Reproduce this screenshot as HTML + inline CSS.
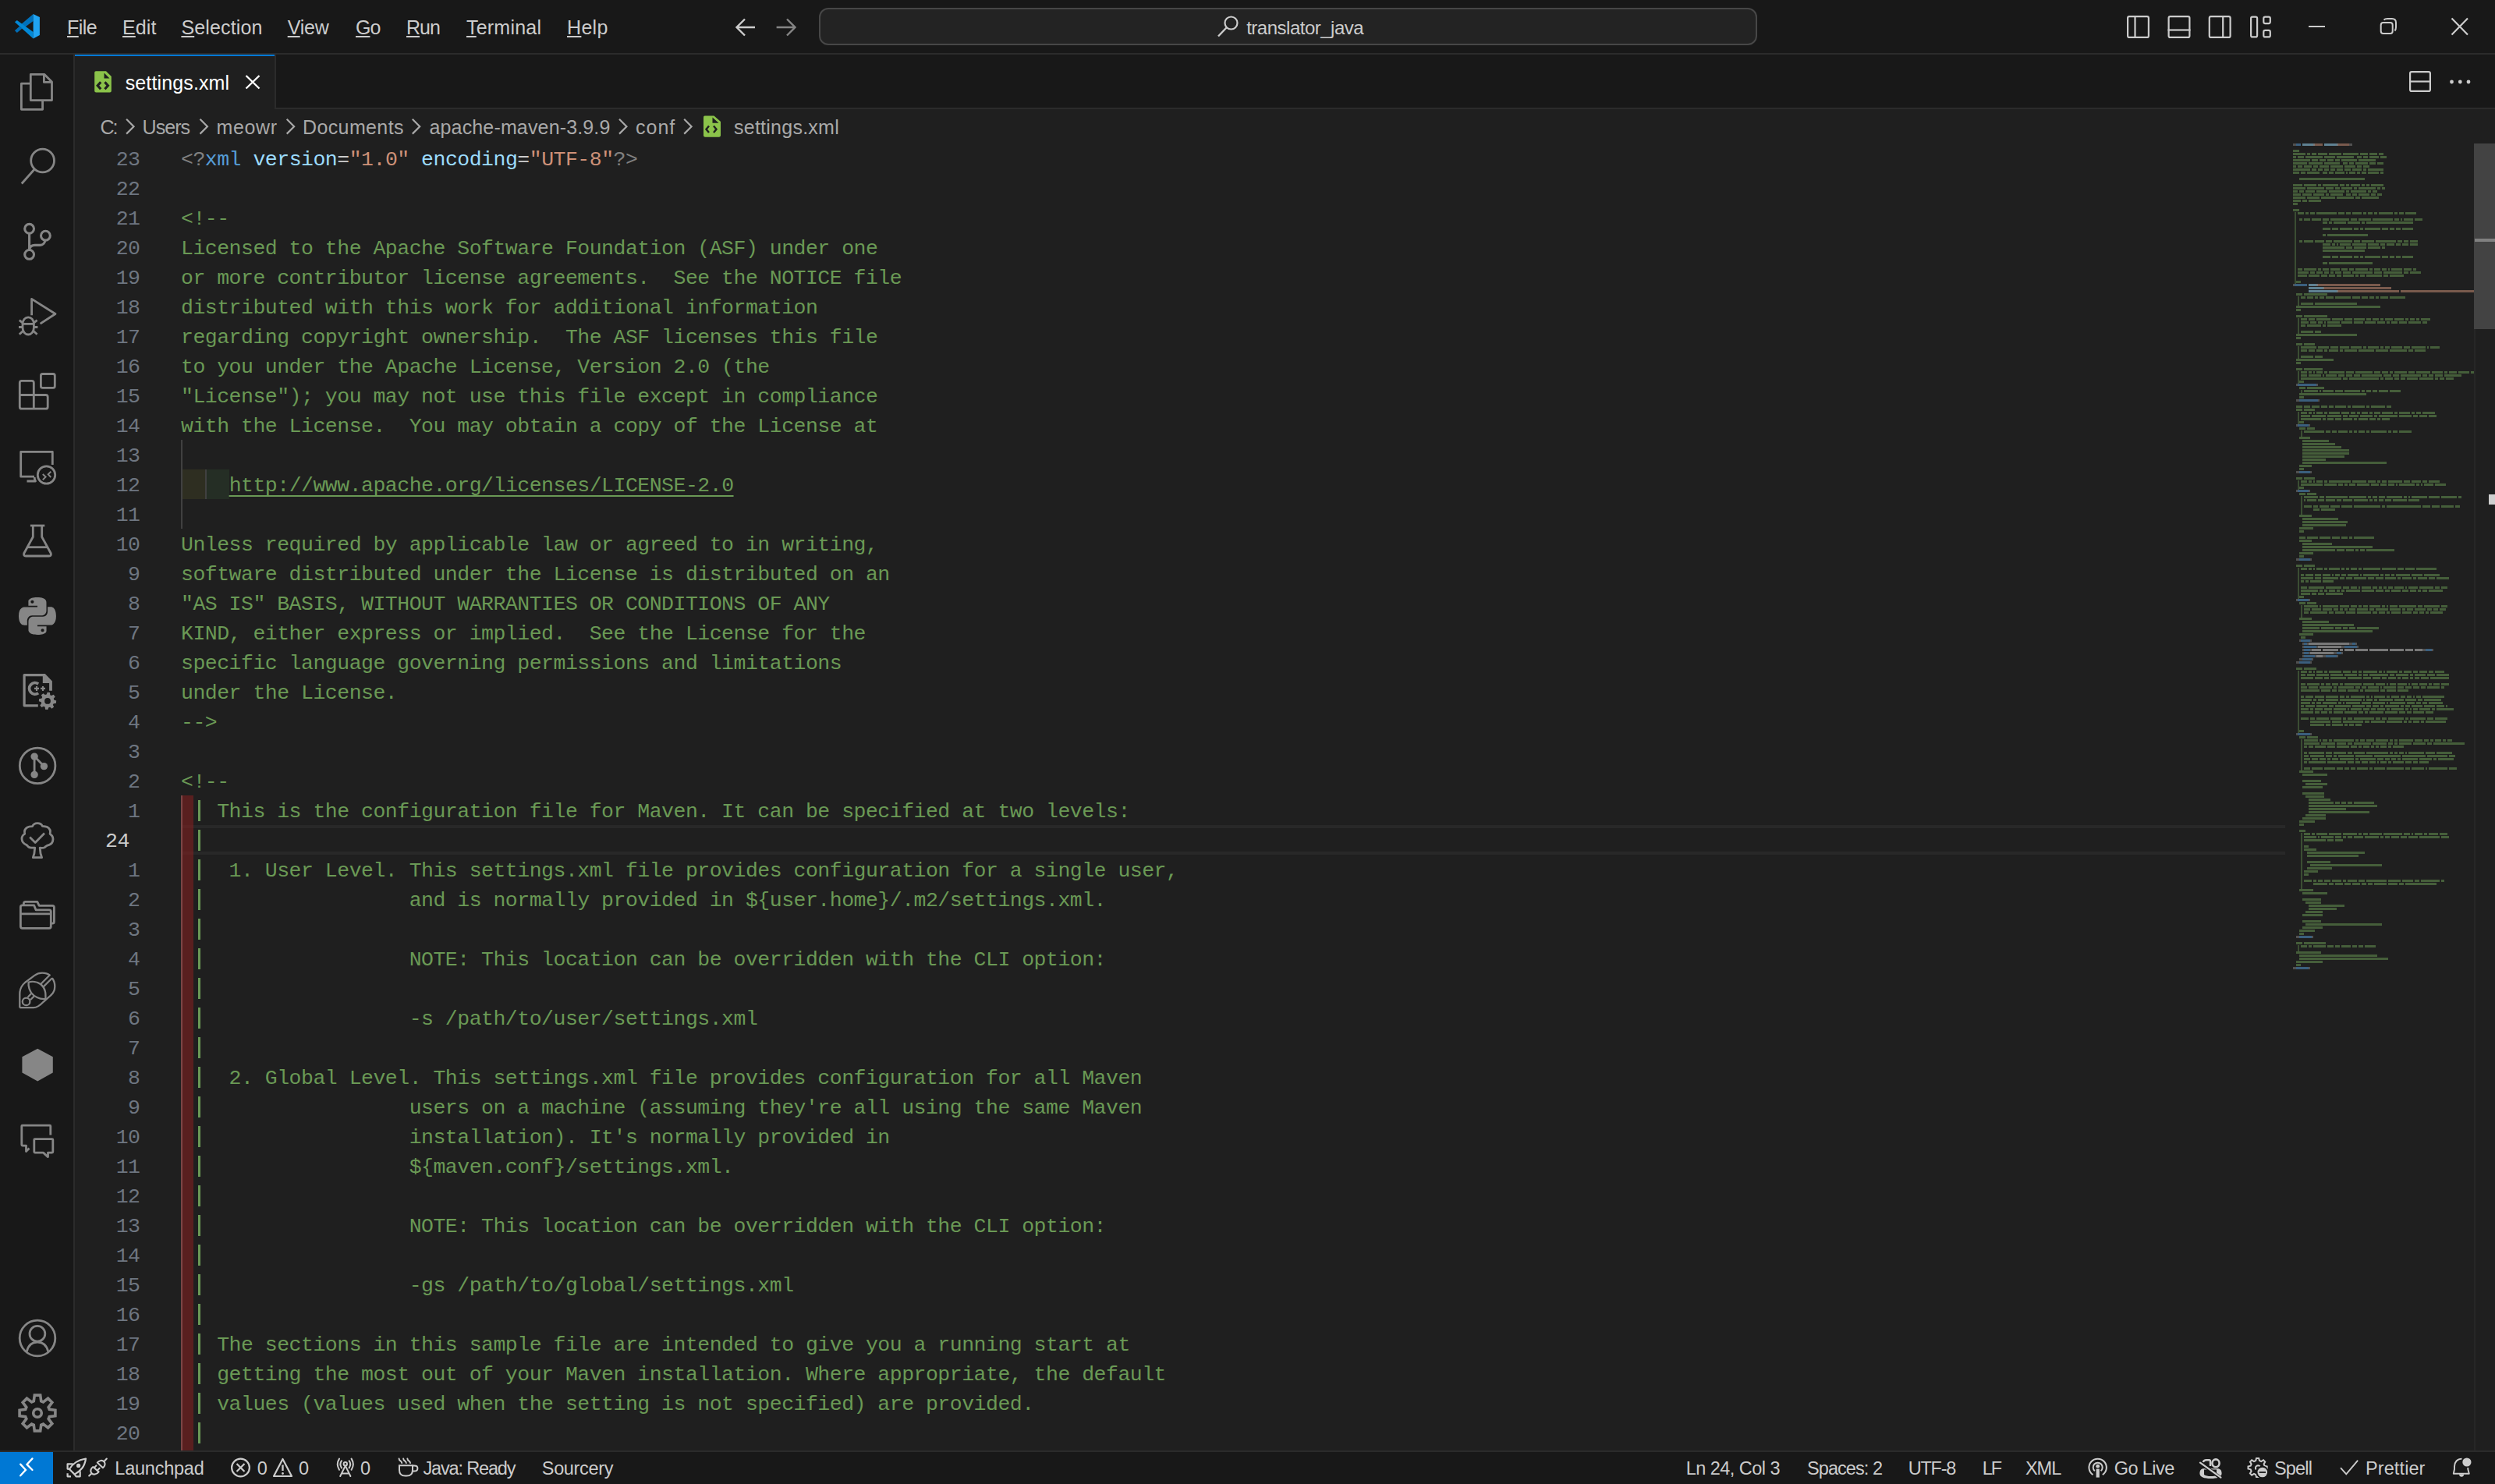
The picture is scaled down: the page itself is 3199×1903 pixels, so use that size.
<!DOCTYPE html>
<html><head><meta charset="utf-8"><style>
html,body{margin:0;padding:0;width:3199px;height:1903px;overflow:hidden;background:#1f1f1f}
</style></head><body>
<div style="position:absolute;left:0;top:0;width:3199px;height:1903px;background:#1f1f1f"></div>
<div style="position:absolute;left:0px;top:0px;width:3199px;height:68px;background:#181818;"></div>
<div style="position:absolute;left:0px;top:68px;width:3199px;height:2px;background:#2b2b2b;"></div>
<div style="position:absolute;left:0px;top:70px;width:94px;height:1790px;background:#181818;"></div>
<div style="position:absolute;left:94px;top:70px;width:2px;height:1790px;background:#2b2b2b;"></div>
<div style="position:absolute;left:96px;top:70px;width:3103px;height:70px;background:#181818;"></div>
<div style="position:absolute;left:96px;top:138px;width:3103px;height:2px;background:#2b2b2b;"></div>
<div style="position:absolute;left:96px;top:70px;width:256px;height:70px;background:#1f1f1f;"></div>
<div style="position:absolute;left:96px;top:70px;width:256px;height:2px;background:#0078d4;"></div>
<div style="position:absolute;left:352px;top:70px;width:2px;height:68px;background:#2b2b2b;"></div>
<div style="position:absolute;left:0px;top:1860px;width:3199px;height:43px;background:#181818;"></div>
<div style="position:absolute;left:0px;top:1860px;width:3199px;height:2px;background:#2b2b2b;"></div>
<div style="position:absolute;left:0px;top:1862px;width:68px;height:41px;background:#0078d4;"></div>
<div style="position:absolute;left:86px;top:19.84px;height:31px;line-height:31px;font-family:'Liberation Sans', sans-serif;font-size:25px;color:#cccccc;white-space:pre;letter-spacing:-0.53px;"><span style="text-decoration:underline;text-underline-offset:2px;text-decoration-thickness:2px">F</span>ile</div>
<div style="position:absolute;left:157px;top:19.84px;height:31px;line-height:31px;font-family:'Liberation Sans', sans-serif;font-size:25px;color:#cccccc;white-space:pre;letter-spacing:0.13px;"><span style="text-decoration:underline;text-underline-offset:2px;text-decoration-thickness:2px">E</span>dit</div>
<div style="position:absolute;left:232.4px;top:19.84px;height:31px;line-height:31px;font-family:'Liberation Sans', sans-serif;font-size:25px;color:#cccccc;white-space:pre;letter-spacing:0.15px;"><span style="text-decoration:underline;text-underline-offset:2px;text-decoration-thickness:2px">S</span>election</div>
<div style="position:absolute;left:368.7px;top:19.84px;height:31px;line-height:31px;font-family:'Liberation Sans', sans-serif;font-size:25px;color:#cccccc;white-space:pre;letter-spacing:-0.23px;"><span style="text-decoration:underline;text-underline-offset:2px;text-decoration-thickness:2px">V</span>iew</div>
<div style="position:absolute;left:456px;top:19.84px;height:31px;line-height:31px;font-family:'Liberation Sans', sans-serif;font-size:25px;color:#cccccc;white-space:pre;letter-spacing:-1.00px;"><span style="text-decoration:underline;text-underline-offset:2px;text-decoration-thickness:2px">G</span>o</div>
<div style="position:absolute;left:521px;top:19.84px;height:31px;line-height:31px;font-family:'Liberation Sans', sans-serif;font-size:25px;color:#cccccc;white-space:pre;letter-spacing:-1.00px;"><span style="text-decoration:underline;text-underline-offset:2px;text-decoration-thickness:2px">R</span>un</div>
<div style="position:absolute;left:598px;top:19.84px;height:31px;line-height:31px;font-family:'Liberation Sans', sans-serif;font-size:25px;color:#cccccc;white-space:pre;letter-spacing:0.21px;"><span style="text-decoration:underline;text-underline-offset:2px;text-decoration-thickness:2px">T</span>erminal</div>
<div style="position:absolute;left:727px;top:19.84px;height:31px;line-height:31px;font-family:'Liberation Sans', sans-serif;font-size:25px;color:#cccccc;white-space:pre;letter-spacing:0.33px;"><span style="text-decoration:underline;text-underline-offset:2px;text-decoration-thickness:2px">H</span>elp</div>
<div style="position:absolute;left:1050px;top:10px;width:1199px;height:44px;border:2px solid #474747;border-radius:12px;background:#232323"></div>
<div style="position:absolute;left:1598.2px;top:20.68px;height:30px;line-height:30px;font-family:'Liberation Sans', sans-serif;font-size:24px;color:#cccccc;white-space:pre;letter-spacing:-0.50px;">translator_java</div>
<div style="position:absolute;left:160.7px;top:91.34px;height:31px;line-height:31px;font-family:'Liberation Sans', sans-serif;font-size:25px;color:#ffffff;white-space:pre;letter-spacing:0.13px;">settings.xml</div>
<div style="position:absolute;left:128.4px;top:148.34px;height:31px;line-height:31px;font-family:'Liberation Sans', sans-serif;font-size:25px;color:#a9a9a9;white-space:pre;letter-spacing:-2.00px;">C:</div>
<div style="position:absolute;left:182.5px;top:148.34px;height:31px;line-height:31px;font-family:'Liberation Sans', sans-serif;font-size:25px;color:#a9a9a9;white-space:pre;letter-spacing:-0.92px;">Users</div>
<div style="position:absolute;left:277.5px;top:148.34px;height:31px;line-height:31px;font-family:'Liberation Sans', sans-serif;font-size:25px;color:#a9a9a9;white-space:pre;letter-spacing:0.62px;">meowr</div>
<div style="position:absolute;left:388px;top:148.34px;height:31px;line-height:31px;font-family:'Liberation Sans', sans-serif;font-size:25px;color:#a9a9a9;white-space:pre;letter-spacing:0.38px;">Documents</div>
<div style="position:absolute;left:550.5px;top:148.34px;height:31px;line-height:31px;font-family:'Liberation Sans', sans-serif;font-size:25px;color:#a9a9a9;white-space:pre;letter-spacing:0.15px;">apache-maven-3.9.9</div>
<div style="position:absolute;left:815px;top:148.34px;height:31px;line-height:31px;font-family:'Liberation Sans', sans-serif;font-size:25px;color:#a9a9a9;white-space:pre;letter-spacing:1.00px;">conf</div>
<div style="position:absolute;left:941px;top:148.34px;height:31px;line-height:31px;font-family:'Liberation Sans', sans-serif;font-size:25px;color:#a9a9a9;white-space:pre;letter-spacing:0.25px;">settings.xml</div>
<div style="position:absolute;left:147.3px;top:1869.36px;height:29px;line-height:29px;font-family:'Liberation Sans', sans-serif;font-size:23.5px;color:#cccccc;white-space:pre;letter-spacing:-0.23px;">Launchpad</div>
<div style="position:absolute;left:329.7px;top:1869.36px;height:29px;line-height:29px;font-family:'Liberation Sans', sans-serif;font-size:23.5px;color:#cccccc;white-space:pre;letter-spacing:0.00px;">0</div>
<div style="position:absolute;left:383px;top:1869.36px;height:29px;line-height:29px;font-family:'Liberation Sans', sans-serif;font-size:23.5px;color:#cccccc;white-space:pre;letter-spacing:0.00px;">0</div>
<div style="position:absolute;left:462px;top:1869.36px;height:29px;line-height:29px;font-family:'Liberation Sans', sans-serif;font-size:23.5px;color:#cccccc;white-space:pre;letter-spacing:0.00px;">0</div>
<div style="position:absolute;left:542.5px;top:1869.36px;height:29px;line-height:29px;font-family:'Liberation Sans', sans-serif;font-size:23.5px;color:#cccccc;white-space:pre;letter-spacing:-1.17px;">Java: Ready</div>
<div style="position:absolute;left:694.8px;top:1869.36px;height:29px;line-height:29px;font-family:'Liberation Sans', sans-serif;font-size:23.5px;color:#cccccc;white-space:pre;letter-spacing:-0.34px;">Sourcery</div>
<div style="position:absolute;left:2161.7px;top:1869.36px;height:29px;line-height:29px;font-family:'Liberation Sans', sans-serif;font-size:23.5px;color:#cccccc;white-space:pre;letter-spacing:-0.54px;">Ln 24, Col 3</div>
<div style="position:absolute;left:2317px;top:1869.36px;height:29px;line-height:29px;font-family:'Liberation Sans', sans-serif;font-size:23.5px;color:#cccccc;white-space:pre;letter-spacing:-0.93px;">Spaces: 2</div>
<div style="position:absolute;left:2446.7px;top:1869.36px;height:29px;line-height:29px;font-family:'Liberation Sans', sans-serif;font-size:23.5px;color:#cccccc;white-space:pre;letter-spacing:-1.22px;">UTF-8</div>
<div style="position:absolute;left:2541.8px;top:1869.36px;height:29px;line-height:29px;font-family:'Liberation Sans', sans-serif;font-size:23.5px;color:#cccccc;white-space:pre;letter-spacing:-2.00px;">LF</div>
<div style="position:absolute;left:2596.9px;top:1869.36px;height:29px;line-height:29px;font-family:'Liberation Sans', sans-serif;font-size:23.5px;color:#cccccc;white-space:pre;letter-spacing:-0.95px;">XML</div>
<div style="position:absolute;left:2710.7px;top:1869.36px;height:29px;line-height:29px;font-family:'Liberation Sans', sans-serif;font-size:23.5px;color:#cccccc;white-space:pre;letter-spacing:-0.57px;">Go Live</div>
<div style="position:absolute;left:2916px;top:1869.36px;height:29px;line-height:29px;font-family:'Liberation Sans', sans-serif;font-size:23.5px;color:#cccccc;white-space:pre;letter-spacing:-0.85px;">Spell</div>
<div style="position:absolute;left:3033px;top:1869.36px;height:29px;line-height:29px;font-family:'Liberation Sans', sans-serif;font-size:23.5px;color:#cccccc;white-space:pre;letter-spacing:0.10px;">Prettier</div>
<div style="position:absolute;left:96px;top:184px;width:3103px;height:1676px;overflow:hidden">
<div style="position:absolute;left:136px;top:874px;width:2698px;height:38px;box-sizing:border-box;border-top:4px solid #282828;border-bottom:4px solid #282828"></div>
<div style="position:absolute;left:136px;top:418px;width:30.8px;height:38px;background:rgba(255,255,64,0.07)"></div>
<div style="position:absolute;left:166.8px;top:418px;width:30.8px;height:38px;background:rgba(127,255,127,0.07)"></div>
<div style="position:absolute;left:136px;top:380px;width:2px;height:114px;background:#404040"></div>
<div style="position:absolute;left:166.8px;top:418px;width:2px;height:38px;background:#404040"></div>
<div style="position:absolute;left:136px;top:836px;width:16.4px;height:874px;background:rgba(128,32,32,0.6)"></div>
<div style="position:absolute;left:136px;top:836px;width:2px;height:874px;background:#7b4545"></div>
<div style="position:absolute;left:52.7px;top:2.1px;height:38px;line-height:38px;font-family:'Liberation Mono', monospace;font-size:26.5px;letter-spacing:-0.50px;color:#6e7681;white-space:pre">23</div>
<div style="position:absolute;left:136px;top:2.1px;height:38px;line-height:38px;font-family:'Liberation Mono', monospace;font-size:26.5px;letter-spacing:-0.50px;white-space:pre"><span style="color:#808080">&lt;?</span><span style="color:#569cd6">xml</span><span style="color:#cccccc"> </span><span style="color:#9cdcfe">version</span><span style="color:#cccccc">=</span><span style="color:#ce9178">&quot;1.0&quot;</span><span style="color:#cccccc"> </span><span style="color:#9cdcfe">encoding</span><span style="color:#cccccc">=</span><span style="color:#ce9178">&quot;UTF-8&quot;</span><span style="color:#808080">?&gt;</span></div>
<div style="position:absolute;left:52.7px;top:40.1px;height:38px;line-height:38px;font-family:'Liberation Mono', monospace;font-size:26.5px;letter-spacing:-0.50px;color:#6e7681;white-space:pre">22</div>
<div style="position:absolute;left:52.7px;top:78.1px;height:38px;line-height:38px;font-family:'Liberation Mono', monospace;font-size:26.5px;letter-spacing:-0.50px;color:#6e7681;white-space:pre">21</div>
<div style="position:absolute;left:136px;top:78.1px;height:38px;line-height:38px;font-family:'Liberation Mono', monospace;font-size:26.5px;letter-spacing:-0.50px;white-space:pre"><span style="color:#6a9955">&lt;!--</span></div>
<div style="position:absolute;left:52.7px;top:116.1px;height:38px;line-height:38px;font-family:'Liberation Mono', monospace;font-size:26.5px;letter-spacing:-0.50px;color:#6e7681;white-space:pre">20</div>
<div style="position:absolute;left:136px;top:116.1px;height:38px;line-height:38px;font-family:'Liberation Mono', monospace;font-size:26.5px;letter-spacing:-0.50px;white-space:pre"><span style="color:#6a9955">Licensed to the Apache Software Foundation (ASF) under one</span></div>
<div style="position:absolute;left:52.7px;top:154.1px;height:38px;line-height:38px;font-family:'Liberation Mono', monospace;font-size:26.5px;letter-spacing:-0.50px;color:#6e7681;white-space:pre">19</div>
<div style="position:absolute;left:136px;top:154.1px;height:38px;line-height:38px;font-family:'Liberation Mono', monospace;font-size:26.5px;letter-spacing:-0.50px;white-space:pre"><span style="color:#6a9955">or more contributor license agreements.  See the NOTICE file</span></div>
<div style="position:absolute;left:52.7px;top:192.1px;height:38px;line-height:38px;font-family:'Liberation Mono', monospace;font-size:26.5px;letter-spacing:-0.50px;color:#6e7681;white-space:pre">18</div>
<div style="position:absolute;left:136px;top:192.1px;height:38px;line-height:38px;font-family:'Liberation Mono', monospace;font-size:26.5px;letter-spacing:-0.50px;white-space:pre"><span style="color:#6a9955">distributed with this work for additional information</span></div>
<div style="position:absolute;left:52.7px;top:230.1px;height:38px;line-height:38px;font-family:'Liberation Mono', monospace;font-size:26.5px;letter-spacing:-0.50px;color:#6e7681;white-space:pre">17</div>
<div style="position:absolute;left:136px;top:230.1px;height:38px;line-height:38px;font-family:'Liberation Mono', monospace;font-size:26.5px;letter-spacing:-0.50px;white-space:pre"><span style="color:#6a9955">regarding copyright ownership.  The ASF licenses this file</span></div>
<div style="position:absolute;left:52.7px;top:268.1px;height:38px;line-height:38px;font-family:'Liberation Mono', monospace;font-size:26.5px;letter-spacing:-0.50px;color:#6e7681;white-space:pre">16</div>
<div style="position:absolute;left:136px;top:268.1px;height:38px;line-height:38px;font-family:'Liberation Mono', monospace;font-size:26.5px;letter-spacing:-0.50px;white-space:pre"><span style="color:#6a9955">to you under the Apache License, Version 2.0 (the</span></div>
<div style="position:absolute;left:52.7px;top:306.1px;height:38px;line-height:38px;font-family:'Liberation Mono', monospace;font-size:26.5px;letter-spacing:-0.50px;color:#6e7681;white-space:pre">15</div>
<div style="position:absolute;left:136px;top:306.1px;height:38px;line-height:38px;font-family:'Liberation Mono', monospace;font-size:26.5px;letter-spacing:-0.50px;white-space:pre"><span style="color:#6a9955">&quot;License&quot;); you may not use this file except in compliance</span></div>
<div style="position:absolute;left:52.7px;top:344.1px;height:38px;line-height:38px;font-family:'Liberation Mono', monospace;font-size:26.5px;letter-spacing:-0.50px;color:#6e7681;white-space:pre">14</div>
<div style="position:absolute;left:136px;top:344.1px;height:38px;line-height:38px;font-family:'Liberation Mono', monospace;font-size:26.5px;letter-spacing:-0.50px;white-space:pre"><span style="color:#6a9955">with the License.  You may obtain a copy of the License at</span></div>
<div style="position:absolute;left:52.7px;top:382.1px;height:38px;line-height:38px;font-family:'Liberation Mono', monospace;font-size:26.5px;letter-spacing:-0.50px;color:#6e7681;white-space:pre">13</div>
<div style="position:absolute;left:52.7px;top:420.1px;height:38px;line-height:38px;font-family:'Liberation Mono', monospace;font-size:26.5px;letter-spacing:-0.50px;color:#6e7681;white-space:pre">12</div>
<div style="position:absolute;left:136px;top:420.1px;height:38px;line-height:38px;font-family:'Liberation Mono', monospace;font-size:26.5px;letter-spacing:-0.50px;white-space:pre"><span style="color:#6a9955">    </span><span style="color:#6a9955;text-decoration:underline;text-decoration-thickness:2px;text-underline-offset:5px">http://www.apache.org/licenses/LICENSE-2.0</span></div>
<div style="position:absolute;left:52.7px;top:458.1px;height:38px;line-height:38px;font-family:'Liberation Mono', monospace;font-size:26.5px;letter-spacing:-0.50px;color:#6e7681;white-space:pre">11</div>
<div style="position:absolute;left:52.7px;top:496.1px;height:38px;line-height:38px;font-family:'Liberation Mono', monospace;font-size:26.5px;letter-spacing:-0.50px;color:#6e7681;white-space:pre">10</div>
<div style="position:absolute;left:136px;top:496.1px;height:38px;line-height:38px;font-family:'Liberation Mono', monospace;font-size:26.5px;letter-spacing:-0.50px;white-space:pre"><span style="color:#6a9955">Unless required by applicable law or agreed to in writing,</span></div>
<div style="position:absolute;left:68.1px;top:534.1px;height:38px;line-height:38px;font-family:'Liberation Mono', monospace;font-size:26.5px;letter-spacing:-0.50px;color:#6e7681;white-space:pre">9</div>
<div style="position:absolute;left:136px;top:534.1px;height:38px;line-height:38px;font-family:'Liberation Mono', monospace;font-size:26.5px;letter-spacing:-0.50px;white-space:pre"><span style="color:#6a9955">software distributed under the License is distributed on an</span></div>
<div style="position:absolute;left:68.1px;top:572.1px;height:38px;line-height:38px;font-family:'Liberation Mono', monospace;font-size:26.5px;letter-spacing:-0.50px;color:#6e7681;white-space:pre">8</div>
<div style="position:absolute;left:136px;top:572.1px;height:38px;line-height:38px;font-family:'Liberation Mono', monospace;font-size:26.5px;letter-spacing:-0.50px;white-space:pre"><span style="color:#6a9955">&quot;AS IS&quot; BASIS, WITHOUT WARRANTIES OR CONDITIONS OF ANY</span></div>
<div style="position:absolute;left:68.1px;top:610.1px;height:38px;line-height:38px;font-family:'Liberation Mono', monospace;font-size:26.5px;letter-spacing:-0.50px;color:#6e7681;white-space:pre">7</div>
<div style="position:absolute;left:136px;top:610.1px;height:38px;line-height:38px;font-family:'Liberation Mono', monospace;font-size:26.5px;letter-spacing:-0.50px;white-space:pre"><span style="color:#6a9955">KIND, either express or implied.  See the License for the</span></div>
<div style="position:absolute;left:68.1px;top:648.1px;height:38px;line-height:38px;font-family:'Liberation Mono', monospace;font-size:26.5px;letter-spacing:-0.50px;color:#6e7681;white-space:pre">6</div>
<div style="position:absolute;left:136px;top:648.1px;height:38px;line-height:38px;font-family:'Liberation Mono', monospace;font-size:26.5px;letter-spacing:-0.50px;white-space:pre"><span style="color:#6a9955">specific language governing permissions and limitations</span></div>
<div style="position:absolute;left:68.1px;top:686.1px;height:38px;line-height:38px;font-family:'Liberation Mono', monospace;font-size:26.5px;letter-spacing:-0.50px;color:#6e7681;white-space:pre">5</div>
<div style="position:absolute;left:136px;top:686.1px;height:38px;line-height:38px;font-family:'Liberation Mono', monospace;font-size:26.5px;letter-spacing:-0.50px;white-space:pre"><span style="color:#6a9955">under the License.</span></div>
<div style="position:absolute;left:68.1px;top:724.1px;height:38px;line-height:38px;font-family:'Liberation Mono', monospace;font-size:26.5px;letter-spacing:-0.50px;color:#6e7681;white-space:pre">4</div>
<div style="position:absolute;left:136px;top:724.1px;height:38px;line-height:38px;font-family:'Liberation Mono', monospace;font-size:26.5px;letter-spacing:-0.50px;white-space:pre"><span style="color:#6a9955">--&gt;</span></div>
<div style="position:absolute;left:68.1px;top:762.1px;height:38px;line-height:38px;font-family:'Liberation Mono', monospace;font-size:26.5px;letter-spacing:-0.50px;color:#6e7681;white-space:pre">3</div>
<div style="position:absolute;left:68.1px;top:800.1px;height:38px;line-height:38px;font-family:'Liberation Mono', monospace;font-size:26.5px;letter-spacing:-0.50px;color:#6e7681;white-space:pre">2</div>
<div style="position:absolute;left:136px;top:800.1px;height:38px;line-height:38px;font-family:'Liberation Mono', monospace;font-size:26.5px;letter-spacing:-0.50px;white-space:pre"><span style="color:#6a9955">&lt;!--</span></div>
<div style="position:absolute;left:68.1px;top:838.1px;height:38px;line-height:38px;font-family:'Liberation Mono', monospace;font-size:26.5px;letter-spacing:-0.50px;color:#6e7681;white-space:pre">1</div>
<div style="position:absolute;left:158.0px;top:842px;width:2.6px;height:27px;background:#6a9955"></div>
<div style="position:absolute;left:136px;top:838.1px;height:38px;line-height:38px;font-family:'Liberation Mono', monospace;font-size:26.5px;letter-spacing:-0.50px;white-space:pre"><span style="color:#6a9955">   This is the configuration file for Maven. It can be specified at two levels:</span></div>
<div style="position:absolute;left:39px;top:876.1px;height:38px;line-height:38px;font-family:'Liberation Mono', monospace;font-size:26.5px;letter-spacing:-0.50px;color:#cccccc;white-space:pre">24</div>
<div style="position:absolute;left:158.0px;top:880px;width:2.6px;height:27px;background:#6a9955"></div>
<div style="position:absolute;left:136px;top:876.1px;height:38px;line-height:38px;font-family:'Liberation Mono', monospace;font-size:26.5px;letter-spacing:-0.50px;white-space:pre"><span style="color:#6a9955">  </span></div>
<div style="position:absolute;left:68.1px;top:914.1px;height:38px;line-height:38px;font-family:'Liberation Mono', monospace;font-size:26.5px;letter-spacing:-0.50px;color:#6e7681;white-space:pre">1</div>
<div style="position:absolute;left:158.0px;top:918px;width:2.6px;height:27px;background:#6a9955"></div>
<div style="position:absolute;left:136px;top:914.1px;height:38px;line-height:38px;font-family:'Liberation Mono', monospace;font-size:26.5px;letter-spacing:-0.50px;white-space:pre"><span style="color:#6a9955">    1. User Level. This settings.xml file provides configuration for a single user,</span></div>
<div style="position:absolute;left:68.1px;top:952.1px;height:38px;line-height:38px;font-family:'Liberation Mono', monospace;font-size:26.5px;letter-spacing:-0.50px;color:#6e7681;white-space:pre">2</div>
<div style="position:absolute;left:158.0px;top:956px;width:2.6px;height:27px;background:#6a9955"></div>
<div style="position:absolute;left:136px;top:952.1px;height:38px;line-height:38px;font-family:'Liberation Mono', monospace;font-size:26.5px;letter-spacing:-0.50px;white-space:pre"><span style="color:#6a9955">                   and is normally provided in ${user.home}/.m2/settings.xml.</span></div>
<div style="position:absolute;left:68.1px;top:990.1px;height:38px;line-height:38px;font-family:'Liberation Mono', monospace;font-size:26.5px;letter-spacing:-0.50px;color:#6e7681;white-space:pre">3</div>
<div style="position:absolute;left:158.0px;top:994px;width:2.6px;height:27px;background:#6a9955"></div>
<div style="position:absolute;left:136px;top:990.1px;height:38px;line-height:38px;font-family:'Liberation Mono', monospace;font-size:26.5px;letter-spacing:-0.50px;white-space:pre"><span style="color:#6a9955">  </span></div>
<div style="position:absolute;left:68.1px;top:1028.1px;height:38px;line-height:38px;font-family:'Liberation Mono', monospace;font-size:26.5px;letter-spacing:-0.50px;color:#6e7681;white-space:pre">4</div>
<div style="position:absolute;left:158.0px;top:1032px;width:2.6px;height:27px;background:#6a9955"></div>
<div style="position:absolute;left:136px;top:1028.1px;height:38px;line-height:38px;font-family:'Liberation Mono', monospace;font-size:26.5px;letter-spacing:-0.50px;white-space:pre"><span style="color:#6a9955">                   NOTE: This location can be overridden with the CLI option:</span></div>
<div style="position:absolute;left:68.1px;top:1066.1px;height:38px;line-height:38px;font-family:'Liberation Mono', monospace;font-size:26.5px;letter-spacing:-0.50px;color:#6e7681;white-space:pre">5</div>
<div style="position:absolute;left:158.0px;top:1070px;width:2.6px;height:27px;background:#6a9955"></div>
<div style="position:absolute;left:136px;top:1066.1px;height:38px;line-height:38px;font-family:'Liberation Mono', monospace;font-size:26.5px;letter-spacing:-0.50px;white-space:pre"><span style="color:#6a9955">  </span></div>
<div style="position:absolute;left:68.1px;top:1104.1px;height:38px;line-height:38px;font-family:'Liberation Mono', monospace;font-size:26.5px;letter-spacing:-0.50px;color:#6e7681;white-space:pre">6</div>
<div style="position:absolute;left:158.0px;top:1108px;width:2.6px;height:27px;background:#6a9955"></div>
<div style="position:absolute;left:136px;top:1104.1px;height:38px;line-height:38px;font-family:'Liberation Mono', monospace;font-size:26.5px;letter-spacing:-0.50px;white-space:pre"><span style="color:#6a9955">                   -s /path/to/user/settings.xml</span></div>
<div style="position:absolute;left:68.1px;top:1142.1px;height:38px;line-height:38px;font-family:'Liberation Mono', monospace;font-size:26.5px;letter-spacing:-0.50px;color:#6e7681;white-space:pre">7</div>
<div style="position:absolute;left:158.0px;top:1146px;width:2.6px;height:27px;background:#6a9955"></div>
<div style="position:absolute;left:136px;top:1142.1px;height:38px;line-height:38px;font-family:'Liberation Mono', monospace;font-size:26.5px;letter-spacing:-0.50px;white-space:pre"><span style="color:#6a9955">  </span></div>
<div style="position:absolute;left:68.1px;top:1180.1px;height:38px;line-height:38px;font-family:'Liberation Mono', monospace;font-size:26.5px;letter-spacing:-0.50px;color:#6e7681;white-space:pre">8</div>
<div style="position:absolute;left:158.0px;top:1184px;width:2.6px;height:27px;background:#6a9955"></div>
<div style="position:absolute;left:136px;top:1180.1px;height:38px;line-height:38px;font-family:'Liberation Mono', monospace;font-size:26.5px;letter-spacing:-0.50px;white-space:pre"><span style="color:#6a9955">    2. Global Level. This settings.xml file provides configuration for all Maven</span></div>
<div style="position:absolute;left:68.1px;top:1218.1px;height:38px;line-height:38px;font-family:'Liberation Mono', monospace;font-size:26.5px;letter-spacing:-0.50px;color:#6e7681;white-space:pre">9</div>
<div style="position:absolute;left:158.0px;top:1222px;width:2.6px;height:27px;background:#6a9955"></div>
<div style="position:absolute;left:136px;top:1218.1px;height:38px;line-height:38px;font-family:'Liberation Mono', monospace;font-size:26.5px;letter-spacing:-0.50px;white-space:pre"><span style="color:#6a9955">                   users on a machine (assuming they&#x27;re all using the same Maven</span></div>
<div style="position:absolute;left:52.7px;top:1256.1px;height:38px;line-height:38px;font-family:'Liberation Mono', monospace;font-size:26.5px;letter-spacing:-0.50px;color:#6e7681;white-space:pre">10</div>
<div style="position:absolute;left:158.0px;top:1260px;width:2.6px;height:27px;background:#6a9955"></div>
<div style="position:absolute;left:136px;top:1256.1px;height:38px;line-height:38px;font-family:'Liberation Mono', monospace;font-size:26.5px;letter-spacing:-0.50px;white-space:pre"><span style="color:#6a9955">                   installation). It&#x27;s normally provided in</span></div>
<div style="position:absolute;left:52.7px;top:1294.1px;height:38px;line-height:38px;font-family:'Liberation Mono', monospace;font-size:26.5px;letter-spacing:-0.50px;color:#6e7681;white-space:pre">11</div>
<div style="position:absolute;left:158.0px;top:1298px;width:2.6px;height:27px;background:#6a9955"></div>
<div style="position:absolute;left:136px;top:1294.1px;height:38px;line-height:38px;font-family:'Liberation Mono', monospace;font-size:26.5px;letter-spacing:-0.50px;white-space:pre"><span style="color:#6a9955">                   ${maven.conf}/settings.xml.</span></div>
<div style="position:absolute;left:52.7px;top:1332.1px;height:38px;line-height:38px;font-family:'Liberation Mono', monospace;font-size:26.5px;letter-spacing:-0.50px;color:#6e7681;white-space:pre">12</div>
<div style="position:absolute;left:158.0px;top:1336px;width:2.6px;height:27px;background:#6a9955"></div>
<div style="position:absolute;left:136px;top:1332.1px;height:38px;line-height:38px;font-family:'Liberation Mono', monospace;font-size:26.5px;letter-spacing:-0.50px;white-space:pre"><span style="color:#6a9955">  </span></div>
<div style="position:absolute;left:52.7px;top:1370.1px;height:38px;line-height:38px;font-family:'Liberation Mono', monospace;font-size:26.5px;letter-spacing:-0.50px;color:#6e7681;white-space:pre">13</div>
<div style="position:absolute;left:158.0px;top:1374px;width:2.6px;height:27px;background:#6a9955"></div>
<div style="position:absolute;left:136px;top:1370.1px;height:38px;line-height:38px;font-family:'Liberation Mono', monospace;font-size:26.5px;letter-spacing:-0.50px;white-space:pre"><span style="color:#6a9955">                   NOTE: This location can be overridden with the CLI option:</span></div>
<div style="position:absolute;left:52.7px;top:1408.1px;height:38px;line-height:38px;font-family:'Liberation Mono', monospace;font-size:26.5px;letter-spacing:-0.50px;color:#6e7681;white-space:pre">14</div>
<div style="position:absolute;left:158.0px;top:1412px;width:2.6px;height:27px;background:#6a9955"></div>
<div style="position:absolute;left:136px;top:1408.1px;height:38px;line-height:38px;font-family:'Liberation Mono', monospace;font-size:26.5px;letter-spacing:-0.50px;white-space:pre"><span style="color:#6a9955">  </span></div>
<div style="position:absolute;left:52.7px;top:1446.1px;height:38px;line-height:38px;font-family:'Liberation Mono', monospace;font-size:26.5px;letter-spacing:-0.50px;color:#6e7681;white-space:pre">15</div>
<div style="position:absolute;left:158.0px;top:1450px;width:2.6px;height:27px;background:#6a9955"></div>
<div style="position:absolute;left:136px;top:1446.1px;height:38px;line-height:38px;font-family:'Liberation Mono', monospace;font-size:26.5px;letter-spacing:-0.50px;white-space:pre"><span style="color:#6a9955">                   -gs /path/to/global/settings.xml</span></div>
<div style="position:absolute;left:52.7px;top:1484.1px;height:38px;line-height:38px;font-family:'Liberation Mono', monospace;font-size:26.5px;letter-spacing:-0.50px;color:#6e7681;white-space:pre">16</div>
<div style="position:absolute;left:158.0px;top:1488px;width:2.6px;height:27px;background:#6a9955"></div>
<div style="position:absolute;left:136px;top:1484.1px;height:38px;line-height:38px;font-family:'Liberation Mono', monospace;font-size:26.5px;letter-spacing:-0.50px;white-space:pre"><span style="color:#6a9955">  </span></div>
<div style="position:absolute;left:52.7px;top:1522.1px;height:38px;line-height:38px;font-family:'Liberation Mono', monospace;font-size:26.5px;letter-spacing:-0.50px;color:#6e7681;white-space:pre">17</div>
<div style="position:absolute;left:158.0px;top:1526px;width:2.6px;height:27px;background:#6a9955"></div>
<div style="position:absolute;left:136px;top:1522.1px;height:38px;line-height:38px;font-family:'Liberation Mono', monospace;font-size:26.5px;letter-spacing:-0.50px;white-space:pre"><span style="color:#6a9955">   The sections in this sample file are intended to give you a running start at</span></div>
<div style="position:absolute;left:52.7px;top:1560.1px;height:38px;line-height:38px;font-family:'Liberation Mono', monospace;font-size:26.5px;letter-spacing:-0.50px;color:#6e7681;white-space:pre">18</div>
<div style="position:absolute;left:158.0px;top:1564px;width:2.6px;height:27px;background:#6a9955"></div>
<div style="position:absolute;left:136px;top:1560.1px;height:38px;line-height:38px;font-family:'Liberation Mono', monospace;font-size:26.5px;letter-spacing:-0.50px;white-space:pre"><span style="color:#6a9955">   getting the most out of your Maven installation. Where appropriate, the default</span></div>
<div style="position:absolute;left:52.7px;top:1598.1px;height:38px;line-height:38px;font-family:'Liberation Mono', monospace;font-size:26.5px;letter-spacing:-0.50px;color:#6e7681;white-space:pre">19</div>
<div style="position:absolute;left:158.0px;top:1602px;width:2.6px;height:27px;background:#6a9955"></div>
<div style="position:absolute;left:136px;top:1598.1px;height:38px;line-height:38px;font-family:'Liberation Mono', monospace;font-size:26.5px;letter-spacing:-0.50px;white-space:pre"><span style="color:#6a9955">   values (values used when the setting is not specified) are provided.</span></div>
<div style="position:absolute;left:52.7px;top:1636.1px;height:38px;line-height:38px;font-family:'Liberation Mono', monospace;font-size:26.5px;letter-spacing:-0.50px;color:#6e7681;white-space:pre">20</div>
<div style="position:absolute;left:158.0px;top:1640px;width:2.6px;height:27px;background:#6a9955"></div>
<div style="position:absolute;left:136px;top:1636.1px;height:38px;line-height:38px;font-family:'Liberation Mono', monospace;font-size:26.5px;letter-spacing:-0.50px;white-space:pre"><span style="color:#6a9955">  </span></div>
<div style="position:absolute;left:52.7px;top:1674.1px;height:38px;line-height:38px;font-family:'Liberation Mono', monospace;font-size:26.5px;letter-spacing:-0.50px;color:#6e7681;white-space:pre">21</div>
<div style="position:absolute;left:158.0px;top:1678px;width:2.6px;height:27px;background:#6a9955"></div>
<div style="position:absolute;left:136px;top:1674.1px;height:38px;line-height:38px;font-family:'Liberation Mono', monospace;font-size:26.5px;letter-spacing:-0.50px;white-space:pre"><span style="color:#6a9955">  --&gt;</span></div>
</div>
<div style="position:absolute;left:3172px;top:184px;width:27px;height:238px;background:#434343;"></div>
<div style="position:absolute;left:3173px;top:306px;width:26px;height:4px;background:#808080;"></div>
<div style="position:absolute;left:3191px;top:634px;width:8px;height:13px;background:#d0d0d0;"></div>
<div style="position:absolute;left:3172px;top:422px;width:2px;height:1438px;background:#262626;"></div>
<svg style="position:absolute;left:0;top:0" width="3199" height="1903" viewBox="0 0 3199 1903"><path fill="none" stroke="#868686" stroke-width="2.8" stroke-linejoin="round" d="M39.3 107.2 H27.4 V140.3 H54.6 V128.6"/>
<path fill="none" stroke="#868686" stroke-width="2.8" stroke-linejoin="round" d="M39.3 95.3 H56.8 L66.5 105 V128.6 H39.3 Z"/>
<path fill="none" stroke="#868686" stroke-width="2.8" stroke-linejoin="round" d="M56.4 95.3 V105.4 H66.5"/>
<circle fill="none" stroke="#868686" stroke-width="2.8" stroke-linejoin="round" cx="54.6" cy="206" r="14.9"/>
<path fill="none" stroke="#868686" stroke-width="2.8" stroke-linejoin="round" d="M44 217.2 L27.8 235.5"/>
<circle fill="none" stroke="#868686" stroke-width="3.1" stroke-linejoin="round" cx="37.6" cy="293.3" r="5.9"/>
<circle fill="none" stroke="#868686" stroke-width="3.1" stroke-linejoin="round" cx="58.4" cy="302.2" r="5.9"/>
<circle fill="none" stroke="#868686" stroke-width="3.1" stroke-linejoin="round" cx="37.6" cy="326.4" r="5.9"/>
<path fill="none" stroke="#868686" stroke-width="3.1" stroke-linejoin="round" d="M37.6 299.2 V320.5"/>
<path fill="none" stroke="#868686" stroke-width="3.1" stroke-linejoin="round" d="M37.6 319.5 C38.6 316 41 314.4 44.5 314.4 H51.5 C55 314.4 57.5 311.5 58 308.1"/>
<path fill="none" stroke="#868686" stroke-width="2.8" stroke-linejoin="round" d="M40.6 404.2 V383.4 L71 402.5 L51.6 415.2"/>
<path fill="none" stroke="#868686" stroke-width="2.8" stroke-linejoin="round" d="M29 416 C29 410 32.5 406.8 36.2 406.8 C40 406.8 43.4 410 43.4 416 V420 C43.4 425.6 40 429 36.2 429 C32.4 429 29 425.6 29 420 Z"/>
<path fill="none" stroke="#868686" stroke-width="2.8" stroke-linejoin="round" d="M29 415.4 H43.4 M24.8 410.6 L29.5 414.4 M47.6 410.6 L42.9 414.4 M24 419.5 H29 M43.4 419.5 H48.4 M24.8 428.8 L29.2 424.8 M47.6 428.8 L43.2 424.8"/>
<rect fill="none" stroke="#868686" stroke-width="2.8" stroke-linejoin="round" x="52.4" y="479.5" width="17.9" height="17.9" rx="2.2"/>
<path fill="none" stroke="#868686" stroke-width="2.8" stroke-linejoin="round" d="M27.5 488.3 H40.8 Q43.3 488.3 43.3 490.8 V506.5 H58.7 Q61.2 506.5 61.2 509 V521.7 Q61.2 524.2 58.7 524.2 H27.8 Q25.3 524.2 25.3 521.7 V490.8 Q25.3 488.3 27.8 488.3 Z"/>
<path fill="none" stroke="#868686" stroke-width="2.8" stroke-linejoin="round" d="M25.3 506.5 H43.3 V524.2"/>
<path fill="none" stroke="#868686" stroke-width="2.8" stroke-linejoin="round" d="M67.3 596 V579.3 H26.7 V611.2 H44"/>
<path fill="none" stroke="#868686" stroke-width="2.8" stroke-linejoin="round" d="M34.5 617 H45.5 Q44.2 615 44.2 612"/>
<circle fill="none" stroke="#868686" stroke-width="2.8" stroke-linejoin="round" cx="59.5" cy="609" r="11.2"/>
<path fill="none" stroke="#868686" stroke-width="2" d="M54.8 608 L58.6 611.6 L54.8 615.3 M65.3 604.8 L61.7 608.3 L65.3 612"/>
<path fill="none" stroke="#868686" stroke-width="2.8" stroke-linejoin="round" d="M38.9 674 H57.3"/>
<path fill="none" stroke="#868686" stroke-width="2.8" stroke-linejoin="round" d="M42.3 674 V688.5 L30.8 709.5 Q29.8 713 33 713 H63 Q66.2 713 65.2 709.5 L53.7 688.5 V674"/>
<path fill="none" stroke="#868686" stroke-width="2.8" stroke-linejoin="round" d="M34.5 701.7 H61.5"/>
<g fill="#868686" transform="translate(24 766) scale(0.1875)"><path d="M126.9 0 C62 0 66 28.2 66 28.2 L66.1 57.4 H128 V66.1 H41.5 C41.5 66.1 0 61.4 0 126.9 C0 192.4 36.2 190.1 36.2 190.1 H57.8 V159.7 C57.8 159.7 56.6 123.5 93.4 123.5 H154.7 C154.7 123.5 189.2 124.1 189.2 90.2 V34.2 C189.2 34.2 194.4 0 126.9 0 Z M92.8 19.6 A11.1 11.1 0 1 1 92.8 41.8 A11.1 11.1 0 1 1 92.8 19.6 Z"/><path d="M128.8 256 C193.7 256 189.7 227.8 189.7 227.8 L189.6 198.6 H127.7 V189.9 H214.2 C214.2 189.9 255.7 194.6 255.7 129.1 C255.7 63.6 219.5 65.9 219.5 65.9 H197.9 V96.3 C197.9 96.3 199.1 132.5 162.3 132.5 H101 C101 132.5 66.5 131.9 66.5 165.8 V221.8 C66.5 221.8 61.3 256 128.8 256 Z M162.9 236.4 A11.1 11.1 0 1 1 162.9 214.2 A11.1 11.1 0 1 1 162.9 236.4 Z"/></g>
<path fill="none" stroke="#868686" stroke-width="3.2" stroke-linejoin="round" d="M48.8 904.8 H31.1 V865.6 H56.5"/>
<path fill="#868686" d="M54.8 864.1 H57.8 L66.9 873.6 V885.8 H63.1 V876 H54.8 Z"/>
<path fill="none" stroke="#868686" stroke-width="3.8" d="M49.1 877.1 A7.2 7.2 0 1 0 49.1 888.7"/>
<path fill="none" stroke="#868686" stroke-width="2.1" d="M44 882.9 H50 M47 879.9 V885.9 M52 882.9 H58 M55 879.9 V885.9"/>
<path fill="#868686" fill-rule="evenodd" d="M59.66 890.61 L60.66 887.71 L63.99 888.11 L64.27 891.16 L65.92 892.09 L68.68 890.75 L70.75 893.38 L68.78 895.74 L69.29 897.56 L72.19 898.56 L71.79 901.89 L68.74 902.17 L67.81 903.82 L69.15 906.58 L66.52 908.65 L64.16 906.68 L62.34 907.19 L61.34 910.09 L58.01 909.69 L57.73 906.64 L56.08 905.71 L53.32 907.05 L51.25 904.42 L53.22 902.06 L52.71 900.24 L49.81 899.24 L50.21 895.91 L53.26 895.63 L54.19 893.98 L52.85 891.22 L55.48 889.15 L57.84 891.12 Z M64.9 898.9 A3.9 3.9 0 1 0 57.1 898.9 A3.9 3.9 0 1 0 64.9 898.9 Z"/>
<circle fill="none" stroke="#868686" stroke-width="2.8" stroke-linejoin="round" cx="48.1" cy="981.9" r="22.8"/>
<circle fill="#868686" cx="44.1" cy="970.1" r="4.7"/>
<circle fill="#868686" cx="56.4" cy="982.6" r="4.7"/>
<circle fill="#868686" cx="44.1" cy="993.4" r="4.7"/>
<path fill="none" stroke="#868686" stroke-width="2.8" stroke-linejoin="round" d="M44.1 970 V993.4 M44.1 970.1 L56.4 982.6"/>
<path fill="none" stroke="#868686" stroke-width="2.8" stroke-linejoin="round" d="M44.7 1087.2 L43.9 1094.5 L42.3 1099.7 H53.6 L52 1094.5 L51.2 1087.2 C53 1087.5 55.8 1087.6 57.2 1086.6 C58.4 1085.6 59 1084.9 60.1 1084.4 C64 1083.5 66.5 1082 67.5 1079 C68.5 1076 67.8 1072 64.1 1069.4 C65 1066 64 1062.5 60.5 1060.6 C58.5 1059.6 56 1059.4 54.4 1059.3 C53.2 1056.8 50.5 1055.7 47.9 1055.7 C45.3 1055.7 42.8 1057 41.5 1059.7 C39.2 1059.8 36.8 1060 35 1060.9 C32 1062.5 31 1066 31.7 1069.4 C29 1071 27.8 1073.5 28 1076 C28.2 1080 30.5 1082 34.2 1083.6 C35.5 1085.6 37.5 1087.2 39.8 1087.2 Z"/>
<path fill="none" stroke="#868686" stroke-width="2.8" stroke-linejoin="round" d="M38.2 1073.6 L45.2 1080.4 L57 1068.6"/>
<path fill="none" stroke="#868686" stroke-width="2.8" stroke-linejoin="round" d="M30.4 1160 V1158.5 Q30.4 1156.3 32.6 1156.3 H47.8 L50.2 1161.4 H67.2 Q69.4 1161.4 69.4 1163.6 V1182 Q69.4 1184.2 67.2 1184.2 H65.3"/>
<path fill="none" stroke="#868686" stroke-width="2.8" stroke-linejoin="round" d="M26.4 1163 Q26.4 1160.8 28.6 1160.8 H43.6 L46 1166.8 H63.1 Q65.3 1166.8 65.3 1169 V1188.1 Q65.3 1190.3 63.1 1190.3 H28.6 Q26.4 1190.3 26.4 1188.1 Z"/>
<path fill="none" stroke="#868686" stroke-width="2.8" stroke-linejoin="round" d="M26.4 1171.9 H65.3"/>
<g fill="none" stroke="#868686" stroke-width="2.3" stroke-linejoin="round"><path d="M25.3 1292.2 V1274.5 C25.3 1268 28 1263.5 32 1260 L44.3 1250.9 C48 1248.2 51 1247.7 54 1247.7 C58 1247.7 61.5 1248.7 63.7 1250.5 L52.2 1262"/><path d="M66.9 1254.2 C69 1257 70.3 1261 70.3 1265 C70.3 1270 68 1274 65 1276.5 L55.6 1284.8 C52.5 1288 49 1292.2 43 1292.2 H25.3"/><path d="M66.9 1254.2 L55.4 1265.6"/><path d="M36.6 1259.6 C41 1258.2 47.5 1258.8 52 1262 C55.5 1264.8 57.6 1269 58.2 1273 C58.6 1276 58.4 1279 58.4 1281 C55 1281.2 50.5 1280.5 47.5 1279 C44.5 1277.6 42 1275.6 40.5 1273.6 C38.6 1271 37 1267 36.6 1263.5 Z"/><path d="M40.4 1273.8 L35.6 1278.8 M43.8 1277.4 L38.9 1282.3"/><circle cx="33.6" cy="1284.4" r="4.8"/></g>
<path fill="#868686" d="M48.2 1344.7 L67.8 1355.2 V1375.6 L48.2 1386.4 L28.4 1375.6 V1355.2 Z"/>
<g transform="translate(0 1.6)">
<path fill="none" stroke="#868686" stroke-width="2.8" stroke-linejoin="round" d="M64.8 1454 V1442.5 Q64.8 1441.5 63.8 1441.5 H28.8 Q27.8 1441.5 27.8 1442.5 V1466.5 Q27.8 1467.5 28.8 1467.5 H33.5 V1475 L37.5 1471"/>
<path fill="none" stroke="#868686" stroke-width="2.8" stroke-linejoin="round" d="M43.8 1460 Q43.8 1459 44.8 1459 H66.8 Q67.8 1459 67.8 1460 V1475.5 Q67.8 1476.5 66.8 1476.5 H61.5 V1482 L55.5 1476.5 H44.8 Q43.8 1476.5 43.8 1475.5 Z"/>
</g>
<circle fill="none" stroke="#868686" stroke-width="2.8" stroke-linejoin="round" cx="48" cy="1716" r="22.8"/>
<circle fill="none" stroke="#868686" stroke-width="2.8" stroke-linejoin="round" cx="47.9" cy="1710.2" r="9.9"/>
<path fill="none" stroke="#868686" stroke-width="2.8" stroke-linejoin="round" d="M34.2 1733.5 C36 1725.5 41 1721.2 48 1721.2 C55 1721.2 60 1725.5 61.8 1733.5"/>
<path fill="none" stroke="#868686" stroke-width="3.6" stroke-linejoin="miter" d="M43.27 1796.71 L44.30 1789.10 L51.70 1789.10 L52.73 1796.71 L55.46 1797.85 L61.58 1793.19 L66.81 1798.42 L62.15 1804.54 L63.29 1807.27 L70.90 1808.30 L70.90 1815.70 L63.29 1816.73 L62.15 1819.46 L66.81 1825.58 L61.58 1830.81 L55.46 1826.15 L52.73 1827.29 L51.70 1834.90 L44.30 1834.90 L43.27 1827.29 L40.54 1826.15 L34.42 1830.81 L29.19 1825.58 L33.85 1819.46 L32.71 1816.73 L25.10 1815.70 L25.10 1808.30 L32.71 1807.27 L33.85 1804.54 L29.19 1798.42 L34.42 1793.19 L40.54 1797.85 Z"/>
<circle fill="none" stroke="#868686" stroke-width="3.6" cx="48" cy="1812" r="5.3"/><path fill="#0071bb" d="M25.5 32.5 L42.6 18 V26.9 L31 35.5 Z"/>
<path fill="#006cb4" d="M18.9 39.3 L25 33.8 L28.5 36.6 L21.8 42 Z"/>
<path fill="#0288d6" d="M18.9 28.3 L21.8 25.9 L42.6 41 V49.6 Z"/>
<path fill="#20a4f3" d="M42.6 18 L50.9 22.1 V45 L42.6 49.6 Z"/>
<path fill="none" stroke="#cccccc" stroke-width="2.4" d="M968 35 H945 M955 24.5 L944.5 35 L955 45.5"/>
<path fill="none" stroke="#858585" stroke-width="2.4" d="M995.6 35 H1019 M1009 24.5 L1019.5 35 L1009 45.5"/>
<circle fill="none" stroke="#cccccc" stroke-width="2.2" cx="1578.5" cy="29.5" r="8"/><path fill="none" stroke="#cccccc" stroke-width="2.4" d="M1572.5 35.5 L1562 46.5"/>
<rect fill="none" stroke="#cccccc" stroke-width="2.2" x="2728.1" y="21.1" width="26.8" height="26.8" rx="2"/><path stroke="#cccccc" stroke-width="2.2" d="M2737.5 21 V48"/>
<rect fill="none" stroke="#cccccc" stroke-width="2.2" x="2780.6" y="21.1" width="26.8" height="26.8" rx="2"/><path stroke="#cccccc" stroke-width="2.2" d="M2779.5 38.5 H2808.5"/>
<rect fill="none" stroke="#cccccc" stroke-width="2.2" x="2832.7999999999997" y="21.1" width="26.8" height="26.8" rx="2"/><path stroke="#cccccc" stroke-width="2.2" d="M2850.2 21 V48"/>
<rect fill="none" stroke="#cccccc" stroke-width="2.2" x="2886.1" y="21.6" width="8" height="25.8" rx="2"/><rect fill="none" stroke="#cccccc" stroke-width="2.2" x="2902.3" y="21.6" width="8.5" height="8.5" rx="2"/><rect fill="none" stroke="#cccccc" stroke-width="2.2" x="2902.3" y="38.9" width="8.5" height="8.5" rx="2"/>
<path stroke="#cccccc" stroke-width="2" d="M2960 34 H2981"/>
<rect fill="none" stroke="#cccccc" stroke-width="2" x="3052.7" y="29" width="15" height="14" rx="3"/><path fill="none" stroke="#cccccc" stroke-width="2" d="M3056.5 25.5 Q3058 24 3061 24 H3067 Q3072 24 3072 29 V35 Q3072 38 3070.5 39.5"/>
<path stroke="#cccccc" stroke-width="2.2" d="M3143.5 23.5 L3164 44.5 M3164 23.5 L3143.5 44.5"/>
<rect fill="none" stroke="#cccccc" stroke-width="2.2" x="3090.1" y="92.1" width="25.8" height="24.8" rx="2"/><path stroke="#cccccc" stroke-width="2.2" d="M3089 104.5 H3117"/>
<circle fill="#cccccc" cx="3143.5" cy="105" r="2.4"/>
<circle fill="#cccccc" cx="3154.3" cy="105" r="2.4"/>
<circle fill="#cccccc" cx="3165" cy="105" r="2.4"/>
<path fill="#8bc34a" d="M123 91.2 H136 L142.8 98 V116.5 Q142.8 118.5 140.8 118.5 H123.2 Q121.2 118.5 121.2 116.5 V93.2 Q121.2 91.2 123 91.2 Z"/>
<path fill="#1f1f1f" d="M133.5 93.5 L140.5 100.5 H133.5 Z"/>
<path fill="none" stroke="#1f1f1f" stroke-width="3.2" stroke-linejoin="miter" d="M129.2 105.2 L125.2 109.7 L129.2 114.2 M134.4 105.2 L138.4 109.7 L134.4 114.2"/>
<path stroke="#ffffff" stroke-width="2.4" d="M315.5 97 L332.5 113.5 M332.5 97 L315.5 113.5"/>
<path fill="none" stroke="#a9a9a9" stroke-width="2.2" d="M162.1 152.8 L171.5 162.2 L162.1 171.6"/>
<path fill="none" stroke="#a9a9a9" stroke-width="2.2" d="M256.5 152.8 L265.90000000000003 162.2 L256.5 171.6"/>
<path fill="none" stroke="#a9a9a9" stroke-width="2.2" d="M367.7 152.8 L377.1 162.2 L367.7 171.6"/>
<path fill="none" stroke="#a9a9a9" stroke-width="2.2" d="M528.8000000000001 152.8 L538.2 162.2 L528.8000000000001 171.6"/>
<path fill="none" stroke="#a9a9a9" stroke-width="2.2" d="M794.0 152.8 L803.4 162.2 L794.0 171.6"/>
<path fill="none" stroke="#a9a9a9" stroke-width="2.2" d="M877.2 152.8 L886.6 162.2 L877.2 171.6"/>
<path fill="#8bc34a" d="M903.6 148.5 H915.5 L924 156 V173.5 Q924 175.7 921.8 175.7 H904.2 Q902 175.7 902 173.5 V150.5 Q902 148.5 903.6 148.5 Z"/>
<path fill="#1f1f1f" d="M913.5 150.5 L921.5 157.8 H913.5 Z"/>
<path fill="none" stroke="#1f1f1f" stroke-width="2.4" d="M909 161.5 L905.5 165.7 L909 170 M915 161.5 L918.5 165.7 L915 170"/><path fill="none" stroke="#ffffff" stroke-width="2.3" stroke-linecap="round" d="M26.2 1877.6 L33 1884.9 L26.2 1892.3 M41.5 1870.4 L34.5 1877.9 L41.5 1885"/>
<g fill="none" stroke="#cccccc" stroke-width="2.2" stroke-linejoin="round"><path d="M89 1884 C92 1878.5 98 1872.5 110 1870.5 C108.5 1881 103.5 1886 95.6 1890.6 Z"/><path d="M93.5 1877.3 H86.6 V1883.6 L89 1884"/><path d="M95.6 1890.6 L97.6 1893.3 H102.7 V1886.6"/><path d="M86.6 1889.3 V1893.3 H91"/></g>
<circle fill="#cccccc" cx="100.6" cy="1879.4" r="2.6"/>
<g fill="none" stroke="#cccccc" stroke-width="2.1" stroke-linejoin="round" stroke-linecap="round"><path d="M119.3 1881 L126.6 1887.4 C124 1891.2 119.2 1891.6 117.2 1888.8 C115.4 1886.2 116.4 1883 119.3 1881 Z"/><path d="M120.8 1882.2 L123.4 1879.4 M124.8 1885.6 L127.6 1882.8 M117.4 1889.6 L114.2 1892.6"/><path d="M124.8 1875.5 L131.9 1882.2 C134.6 1880 135.6 1876.8 133.4 1874.4 C131 1872 127.6 1872.6 124.8 1875.5 Z"/><path d="M133.8 1873.7 L136.8 1870.6"/></g>
<circle fill="none" stroke="#cccccc" stroke-width="2.2" cx="308.5" cy="1882" r="11.4"/><path stroke="#cccccc" stroke-width="2.2" d="M303.5 1877 L313.5 1887 M313.5 1877 L303.5 1887"/>
<path fill="none" stroke="#cccccc" stroke-width="2.2" stroke-linejoin="round" d="M362.5 1871 L374 1893 H351 Z"/><path stroke="#cccccc" stroke-width="2.4" d="M362.5 1878.5 V1886"/><circle fill="#cccccc" cx="362.5" cy="1889.5" r="1.4"/>
<g fill="none" stroke="#cccccc" stroke-width="2" stroke-linecap="round"><path d="M435 1870.6 Q430.6 1877.6 435 1884.8 M450.6 1870.6 Q455 1877.6 450.6 1884.8 M438 1873.2 Q434.8 1877.6 438 1882.4 M447.6 1873.2 Q450.8 1877.6 447.6 1882.4"/><path d="M442.8 1879.6 L436.2 1893 M442.8 1879.6 L449.4 1893 M438.6 1889.4 H447"/><circle cx="442.8" cy="1877.3" r="2.2"/></g>
<g fill="none" stroke="#cccccc" stroke-width="2" stroke-linecap="round"><path d="M512 1879.2 H529 V1885 Q529 1892.6 521.5 1892.6 H519.5 Q512 1892.6 512 1885 Z"/><path d="M529 1879.6 H531.5 Q535.4 1879.6 535.4 1883 Q535.4 1886.6 531 1886.6 H529"/><path d="M511.6 1870.6 Q511.8 1872.4 513.4 1873.4 Q515 1874.4 515.2 1876 M517.2 1870.6 Q517.4 1872.4 519 1873.4 Q520.6 1874.4 520.8 1876 M522.4 1870.6 Q522.6 1872.4 524.2 1873.4 Q525.8 1874.4 526 1876"/></g>
<g fill="none" stroke="#cccccc" stroke-width="2"><path d="M2683.5 1891.2 A11.2 11.2 0 1 1 2695.8 1891.2"/><path d="M2685.8 1886.2 A6 6 0 1 1 2693.6 1886.2"/></g><circle fill="#cccccc" cx="2689.7" cy="1880.2" r="2.4"/><path fill="#cccccc" d="M2687.6 1883.6 H2691.8 V1894.6 H2687.6 Z"/>
<path fill="#cccccc" fill-rule="evenodd" d="M2820.4 1889.5 C2820.4 1885 2822.5 1883.2 2826 1883.2 H2843 C2847 1883.2 2848.6 1885.5 2848.6 1889.5 C2848.6 1894 2843 1896 2834.5 1896 C2826 1896 2820.4 1894 2820.4 1889.5 Z M2826 1884.6 V1891 C2828 1892.5 2831 1893 2834.5 1893 C2838 1893 2840.5 1892.6 2842 1891.5 V1884.6 Z"/>
<path fill="none" stroke="#cccccc" stroke-width="2.4" d="M2824.8 1875 Q2825.5 1872.3 2829 1872.3 H2832.5 Q2834 1872.3 2834 1874 V1880"/>
<ellipse fill="none" stroke="#cccccc" stroke-width="2.6" cx="2841" cy="1876.3" rx="4.6" ry="4.9"/>
<path stroke="#181818" stroke-width="4.2" d="M2819 1874.5 L2849 1896.5"/><path stroke="#cccccc" stroke-width="2.3" stroke-linecap="round" d="M2821 1875.6 L2847.4 1894.6"/>
<path fill="none" stroke="#cccccc" stroke-width="2" d="M2892.23 1873.11 L2893.02 1869.90 L2896.18 1869.90 L2896.97 1873.11 L2899.21 1874.04 L2902.04 1872.33 L2904.27 1874.56 L2902.56 1877.39 L2903.49 1879.63 L2906.70 1880.42 L2906.70 1883.58 L2903.49 1884.37 L2902.56 1886.61 L2904.27 1889.44 L2902.04 1891.67 L2899.21 1889.96 L2896.97 1890.89 L2896.18 1894.10 L2893.02 1894.10 L2892.23 1890.89 L2889.99 1889.96 L2887.16 1891.67 L2884.93 1889.44 L2886.64 1886.61 L2885.71 1884.37 L2882.50 1883.58 L2882.50 1880.42 L2885.71 1879.63 L2886.64 1877.39 L2884.93 1874.56 L2887.16 1872.33 L2889.99 1874.04 Z"/><path fill="none" stroke="#cccccc" stroke-width="2" d="M2892.6 1884.5 A3 3 0 0 1 2897.6 1880.5"/>
<circle fill="#181818" cx="2900.8" cy="1888" r="8.2"/><circle fill="#cccccc" cx="2900.8" cy="1888" r="6.3"/><path stroke="#181818" stroke-width="1.8" d="M2896.6 1888 H2905"/>
<path fill="none" stroke="#cccccc" stroke-width="1.9" stroke-linecap="round" d="M3001.6 1882.8 L3008.3 1890.4 L3022.6 1873.3"/>
<path fill="none" stroke="#cccccc" stroke-width="1.9" stroke-linejoin="round" d="M3156.5 1870.6 C3150.5 1870.6 3147 1875 3147 1880.5 V1884 L3145.8 1889.8 H3165.8 L3164.3 1884 V1882"/><path fill="#cccccc" d="M3153 1890.6 H3159.2 A3.1 3.1 0 0 1 3153 1890.6 Z"/>
<circle fill="#cccccc" cx="3162.9" cy="1875" r="5.6"/><path fill="#808080" fill-opacity="0.52" d="M2940 184h4v3h-4zM3012 184h4v3h-4zM2940 364h2v3h-2zM2944 492h2v3h-2zM2970 492h2v3h-2zM2944 512h4v3h-4zM2972 512h2v3h-2zM2944 544h2v3h-2zM2960 544h2v3h-2zM2944 604h4v3h-4zM2962 604h2v3h-2zM2944 628h2v3h-2zM2960 628h2v3h-2zM2944 716h4v3h-4zM2962 716h2v3h-2zM2944 768h2v3h-2zM2960 768h2v3h-2zM2948 820h2v3h-2zM2962 820h2v3h-2zM2952 824h2v3h-2zM2958 824h2v3h-2zM3012 824h4v3h-4zM3020 824h2v3h-2zM2952 828h2v3h-2zM2970 828h2v3h-2zM3002 828h4v3h-4zM3022 828h2v3h-2zM2952 832h2v3h-2zM2962 832h2v3h-2zM3106 832h4v3h-4zM3118 832h2v3h-2zM2952 836h2v3h-2zM2960 836h2v3h-2zM2992 836h4v3h-4zM3002 836h2v3h-2zM2952 840h2v3h-2zM2968 840h2v3h-2zM2978 840h4v3h-4zM2996 840h2v3h-2zM2948 844h4v3h-4zM2964 844h2v3h-2zM2944 848h4v3h-4zM2962 848h2v3h-2zM2944 940h2v3h-2zM2962 940h2v3h-2zM2944 1200h4v3h-4zM2964 1200h2v3h-2zM2940 1240h4v3h-4zM2960 1240h2v3h-2z"/>
<path fill="#569cd6" fill-opacity="0.52" d="M2944 184h6v3h-6zM2942 364h16v3h-16zM2946 492h24v3h-24zM2948 512h24v3h-24zM2946 544h14v3h-14zM2948 604h14v3h-14zM2946 628h14v3h-14zM2948 716h14v3h-14zM2946 768h14v3h-14zM2950 820h12v3h-12zM2954 824h4v3h-4zM3016 824h4v3h-4zM2954 828h16v3h-16zM3006 828h16v3h-16zM2954 832h8v3h-8zM3110 832h8v3h-8zM2954 836h6v3h-6zM2996 836h6v3h-6zM2954 840h14v3h-14zM2982 840h14v3h-14zM2952 844h12v3h-12zM2948 848h14v3h-14zM2946 940h16v3h-16zM2948 1200h16v3h-16zM2944 1240h16v3h-16z"/>
<path fill="#9cdcfe" fill-opacity="0.52" d="M2952 184h14v3h-14zM2980 184h16v3h-16zM2960 364h10v3h-10zM2960 368h18v3h-18zM2960 372h36v3h-36z"/>
<path fill="#cccccc" fill-opacity="0.52" d="M2966 184h2v3h-2zM2996 184h2v3h-2zM2970 364h2v3h-2zM2978 368h2v3h-2zM2996 372h2v3h-2zM2960 824h52v3h-52zM2972 828h30v3h-30zM2964 832h12v3h-12zM2978 832h20v3h-20zM3000 832h4v3h-4zM3006 832h12v3h-12zM3020 832h16v3h-16zM3038 832h24v3h-24zM3064 832h18v3h-18zM3084 832h10v3h-10zM3096 832h10v3h-10zM2962 836h30v3h-30zM2970 840h8v3h-8z"/>
<path fill="#ce9178" fill-opacity="0.52" d="M2968 184h10v3h-10zM2998 184h14v3h-14zM2972 364h80v3h-80zM2980 368h86v3h-86zM2998 372h78v3h-78zM3078 372h94v3h-94z"/>
<path fill="#6a9955" fill-opacity="0.52" d="M2940 192h8v3h-8zM2940 196h16v3h-16zM2958 196h4v3h-4zM2964 196h6v3h-6zM2972 196h12v3h-12zM2986 196h16v3h-16zM3004 196h20v3h-20zM3026 196h10v3h-10zM3038 196h10v3h-10zM3050 196h6v3h-6zM2940 200h4v3h-4zM2946 200h8v3h-8zM2956 200h22v3h-22zM2980 200h14v3h-14zM2996 200h22v3h-22zM3022 200h6v3h-6zM3030 200h6v3h-6zM3038 200h12v3h-12zM3052 200h8v3h-8zM2940 204h22v3h-22zM2964 204h8v3h-8zM2974 204h8v3h-8zM2984 204h8v3h-8zM2994 204h6v3h-6zM3002 204h20v3h-20zM3024 204h22v3h-22zM2940 208h18v3h-18zM2960 208h18v3h-18zM2980 208h20v3h-20zM3004 208h6v3h-6zM3012 208h6v3h-6zM3020 208h16v3h-16zM3038 208h8v3h-8zM3048 208h8v3h-8zM2940 212h4v3h-4zM2946 212h6v3h-6zM2954 212h10v3h-10zM2966 212h6v3h-6zM2974 212h12v3h-12zM2988 212h16v3h-16zM3006 212h14v3h-14zM3022 212h6v3h-6zM3030 212h8v3h-8zM2940 216h22v3h-22zM2964 216h6v3h-6zM2972 216h6v3h-6zM2980 216h6v3h-6zM2988 216h6v3h-6zM2996 216h8v3h-8zM3006 216h8v3h-8zM3016 216h12v3h-12zM3030 216h4v3h-4zM3036 216h20v3h-20zM2940 220h8v3h-8zM2950 220h6v3h-6zM2958 220h16v3h-16zM2978 220h6v3h-6zM2986 220h6v3h-6zM2994 220h12v3h-12zM3008 220h2v3h-2zM3012 220h8v3h-8zM3022 220h4v3h-4zM3028 220h6v3h-6zM3036 220h14v3h-14zM3052 220h4v3h-4zM2948 228h84v3h-84zM2940 236h12v3h-12zM2954 236h16v3h-16zM2972 236h4v3h-4zM2978 236h20v3h-20zM3000 236h6v3h-6zM3008 236h4v3h-4zM3014 236h12v3h-12zM3028 236h4v3h-4zM3034 236h4v3h-4zM3040 236h16v3h-16zM2940 240h16v3h-16zM2958 240h22v3h-22zM2982 240h10v3h-10zM2994 240h6v3h-6zM3002 240h14v3h-14zM3018 240h4v3h-4zM3024 240h22v3h-22zM3048 240h4v3h-4zM3054 240h4v3h-4zM2940 244h6v3h-6zM2948 244h6v3h-6zM2956 244h12v3h-12zM2970 244h14v3h-14zM2986 244h20v3h-20zM3008 244h4v3h-4zM3014 244h20v3h-20zM3036 244h4v3h-4zM3042 244h6v3h-6zM2940 248h10v3h-10zM2952 248h12v3h-12zM2966 248h14v3h-14zM2982 248h4v3h-4zM2988 248h16v3h-16zM3008 248h6v3h-6zM3016 248h6v3h-6zM3024 248h14v3h-14zM3040 248h6v3h-6zM3048 248h6v3h-6zM2940 252h16v3h-16zM2958 252h16v3h-16zM2976 252h18v3h-18zM2996 252h22v3h-22zM3020 252h6v3h-6zM3028 252h22v3h-22zM2940 256h10v3h-10zM2952 256h6v3h-6zM2960 256h16v3h-16zM2940 260h6v3h-6zM2940 268h8v3h-8zM2946 272h8v3h-8zM2956 272h4v3h-4zM2962 272h6v3h-6zM2970 272h26v3h-26zM2998 272h8v3h-8zM3008 272h6v3h-6zM3016 272h12v3h-12zM3030 272h4v3h-4zM3036 272h6v3h-6zM3044 272h4v3h-4zM3050 272h18v3h-18zM3070 272h4v3h-4zM3076 272h6v3h-6zM3084 272h14v3h-14zM2948 280h4v3h-4zM2954 280h8v3h-8zM2964 280h12v3h-12zM2978 280h8v3h-8zM2988 280h24v3h-24zM3014 280h8v3h-8zM3024 280h16v3h-16zM3042 280h26v3h-26zM3070 280h6v3h-6zM3078 280h2v3h-2zM3082 280h12v3h-12zM3096 280h10v3h-10zM2978 284h6v3h-6zM2986 284h4v3h-4zM2992 284h16v3h-16zM3010 284h16v3h-16zM3028 284h4v3h-4zM3034 284h60v3h-60zM2978 292h10v3h-10zM2990 292h8v3h-8zM3000 292h16v3h-16zM3018 292h6v3h-6zM3026 292h4v3h-4zM3032 292h20v3h-20zM3054 292h8v3h-8zM3064 292h6v3h-6zM3072 292h6v3h-6zM3080 292h14v3h-14zM2978 300h4v3h-4zM2984 300h52v3h-52zM2948 308h4v3h-4zM2954 308h12v3h-12zM2968 308h12v3h-12zM2982 308h8v3h-8zM2992 308h24v3h-24zM3018 308h8v3h-8zM3028 308h16v3h-16zM3046 308h26v3h-26zM3074 308h6v3h-6zM3082 308h6v3h-6zM3090 308h10v3h-10zM2978 312h10v3h-10zM2990 312h4v3h-4zM2996 312h2v3h-2zM3000 312h14v3h-14zM3016 312h18v3h-18zM3036 312h14v3h-14zM3052 312h6v3h-6zM3060 312h10v3h-10zM3072 312h6v3h-6zM3080 312h8v3h-8zM3090 312h10v3h-10zM2978 316h28v3h-28zM3008 316h8v3h-8zM3018 316h16v3h-16zM3036 316h16v3h-16zM3054 316h4v3h-4zM2978 320h54v3h-54zM2978 328h10v3h-10zM2990 328h8v3h-8zM3000 328h16v3h-16zM3018 328h6v3h-6zM3026 328h4v3h-4zM3032 328h20v3h-20zM3054 328h8v3h-8zM3064 328h6v3h-6zM3072 328h6v3h-6zM3080 328h14v3h-14zM2978 336h6v3h-6zM2986 336h56v3h-56zM2946 344h6v3h-6zM2954 344h16v3h-16zM2972 344h4v3h-4zM2978 344h8v3h-8zM2988 344h12v3h-12zM3002 344h8v3h-8zM3012 344h6v3h-6zM3020 344h16v3h-16zM3038 344h4v3h-4zM3044 344h8v3h-8zM3054 344h6v3h-6zM3062 344h2v3h-2zM3066 344h14v3h-14zM3082 344h10v3h-10zM3094 344h4v3h-4zM2946 348h14v3h-14zM2962 348h6v3h-6zM2970 348h8v3h-8zM2980 348h6v3h-6zM2988 348h4v3h-4zM2994 348h8v3h-8zM3004 348h10v3h-10zM3016 348h26v3h-26zM3044 348h10v3h-10zM3056 348h24v3h-24zM3082 348h6v3h-6zM3090 348h14v3h-14zM2946 352h12v3h-12zM2960 352h14v3h-14zM2976 352h8v3h-8zM2986 352h8v3h-8zM2996 352h6v3h-6zM3004 352h14v3h-14zM3020 352h4v3h-4zM3026 352h6v3h-6zM3034 352h20v3h-20zM3056 352h6v3h-6zM3064 352h18v3h-18zM2944 360h6v3h-6zM2944 376h8v3h-8zM2954 376h30v3h-30zM2950 380h6v3h-6zM2958 380h8v3h-8zM2968 380h4v3h-4zM2974 380h6v3h-6zM2982 380h10v3h-10zM2994 380h20v3h-20zM3016 380h10v3h-10zM3028 380h8v3h-8zM3038 380h6v3h-6zM3046 380h4v3h-4zM3052 380h10v3h-10zM3064 380h20v3h-20zM2950 388h16v3h-16zM2968 388h54v3h-54zM2944 392h108v3h-108zM2944 396h6v3h-6zM2944 404h8v3h-8zM2954 404h30v3h-30zM2950 408h8v3h-8zM2960 408h8v3h-8zM2970 408h18v3h-18zM2990 408h14v3h-14zM3006 408h10v3h-10zM3018 408h14v3h-14zM3034 408h6v3h-6zM3042 408h8v3h-8zM3052 408h4v3h-4zM3058 408h10v3h-10zM3070 408h12v3h-12zM3084 408h4v3h-4zM3090 408h6v3h-6zM3098 408h4v3h-4zM3104 408h12v3h-12zM2950 412h10v3h-10zM2962 412h8v3h-8zM2972 412h6v3h-6zM2980 412h2v3h-2zM2984 412h16v3h-16zM3002 412h14v3h-14zM3018 412h12v3h-12zM3032 412h14v3h-14zM3048 412h10v3h-10zM3060 412h4v3h-4zM3066 412h8v3h-8zM3076 412h10v3h-10zM3088 412h16v3h-16zM3106 412h6v3h-6zM2950 416h6v3h-6zM2958 416h18v3h-18zM2978 416h4v3h-4zM2984 416h18v3h-18zM2950 424h16v3h-16zM2968 424h8v3h-8zM2944 428h78v3h-78zM2944 432h6v3h-6zM2944 440h8v3h-8zM2954 440h14v3h-14zM2950 444h20v3h-20zM2972 444h14v3h-14zM2988 444h10v3h-10zM3000 444h12v3h-12zM3014 444h14v3h-14zM3030 444h4v3h-4zM3036 444h14v3h-14zM3052 444h4v3h-4zM3058 444h6v3h-6zM3066 444h14v3h-14zM3082 444h8v3h-8zM3092 444h18v3h-18zM3112 444h2v3h-2zM3116 444h12v3h-12zM2950 448h8v3h-8zM2960 448h8v3h-8zM2970 448h8v3h-8zM2980 448h4v3h-4zM2986 448h12v3h-12zM3000 448h4v3h-4zM3006 448h16v3h-16zM3024 448h20v3h-20zM3046 448h16v3h-16zM3064 448h22v3h-22zM3088 448h6v3h-6zM3096 448h14v3h-14zM2950 456h16v3h-16zM2968 456h10v3h-10zM2944 460h48v3h-48zM2944 464h6v3h-6zM2944 472h8v3h-8zM2954 472h24v3h-24zM2950 476h8v3h-8zM2960 476h4v3h-4zM2966 476h2v3h-2zM2970 476h8v3h-8zM2980 476h4v3h-4zM2986 476h20v3h-20zM3008 476h10v3h-10zM3020 476h22v3h-22zM3044 476h8v3h-8zM3054 476h8v3h-8zM3064 476h4v3h-4zM3070 476h16v3h-16zM3088 476h8v3h-8zM3098 476h18v3h-18zM3118 476h14v3h-14zM3134 476h4v3h-4zM3140 476h10v3h-10zM3152 476h14v3h-14zM3168 476h4v3h-4zM2950 480h8v3h-8zM2960 480h16v3h-16zM2978 480h2v3h-2zM2982 480h14v3h-14zM2998 480h8v3h-8zM3008 480h8v3h-8zM3018 480h8v3h-8zM3028 480h26v3h-26zM3056 480h10v3h-10zM3068 480h8v3h-8zM3078 480h26v3h-26zM3106 480h6v3h-6zM3114 480h6v3h-6zM3122 480h10v3h-10zM3134 480h22v3h-22zM2950 484h52v3h-52zM3004 484h6v3h-6zM3012 484h38v3h-38zM3052 484h4v3h-4zM3058 484h10v3h-10zM3070 484h6v3h-6zM3078 484h6v3h-6zM3086 484h14v3h-14zM3102 484h18v3h-18zM3122 484h4v3h-4zM3128 484h6v3h-6zM3136 484h10v3h-10zM2948 488h6v3h-6zM2948 496h8v3h-8zM2958 496h22v3h-22zM2954 500h18v3h-18zM2974 500h2v3h-2zM2978 500h14v3h-14zM2994 500h10v3h-10zM3006 500h20v3h-20zM3028 500h4v3h-4zM3034 500h6v3h-6zM3042 500h6v3h-6zM3050 500h12v3h-12zM3064 500h14v3h-14zM2948 504h86v3h-86zM2948 508h6v3h-6zM2944 520h8v3h-8zM2954 520h8v3h-8zM2964 520h10v3h-10zM2976 520h8v3h-8zM2986 520h6v3h-6zM2994 520h14v3h-14zM3010 520h4v3h-4zM3016 520h16v3h-16zM3034 520h4v3h-4zM3040 520h18v3h-18zM3060 520h6v3h-6zM2944 524h8v3h-8zM2954 524h14v3h-14zM2950 528h8v3h-8zM2960 528h4v3h-4zM2966 528h2v3h-2zM2970 528h8v3h-8zM2980 528h4v3h-4zM2986 528h14v3h-14zM3002 528h10v3h-10zM3014 528h6v3h-6zM3022 528h4v3h-4zM3028 528h8v3h-8zM3038 528h4v3h-4zM3044 528h8v3h-8zM3054 528h14v3h-14zM3070 528h4v3h-4zM3076 528h14v3h-14zM3092 528h4v3h-4zM3098 528h6v3h-6zM3106 528h16v3h-16zM2950 532h12v3h-12zM2964 532h18v3h-18zM2984 532h18v3h-18zM3004 532h6v3h-6zM3012 532h12v3h-12zM3026 532h16v3h-16zM3044 532h4v3h-4zM3050 532h24v3h-24zM3076 532h16v3h-16zM3094 532h6v3h-6zM3102 532h10v3h-10zM3114 532h10v3h-10zM2950 536h26v3h-26zM2978 536h4v3h-4zM2984 536h8v3h-8zM2994 536h8v3h-8zM3004 536h12v3h-12zM3018 536h4v3h-4zM3024 536h12v3h-12zM3038 536h8v3h-8zM3048 536h4v3h-4zM3054 536h10v3h-10zM2948 540h6v3h-6zM2948 548h8v3h-8zM2958 548h10v3h-10zM2954 552h26v3h-26zM2982 552h6v3h-6zM2990 552h6v3h-6zM2998 552h12v3h-12zM3012 552h4v3h-4zM3018 552h4v3h-4zM3024 552h8v3h-8zM3034 552h4v3h-4zM3040 552h20v3h-20zM3062 552h4v3h-4zM3068 552h6v3h-6zM3076 552h16v3h-16zM2948 560h14v3h-14zM2952 564h34v3h-34zM2952 568h42v3h-42zM2952 572h50v3h-50zM2952 576h60v3h-60zM2952 580h60v3h-60zM2952 584h54v3h-54zM2952 588h30v3h-30zM2952 592h48v3h-48zM3000 592h2v3h-2zM3002 592h58v3h-58zM2948 596h16v3h-16zM2948 600h6v3h-6zM2944 612h8v3h-8zM2954 612h14v3h-14zM2950 616h8v3h-8zM2960 616h4v3h-4zM2966 616h2v3h-2zM2970 616h8v3h-8zM2980 616h4v3h-4zM2986 616h28v3h-28zM3016 616h18v3h-18zM3036 616h10v3h-10zM3048 616h4v3h-4zM3054 616h6v3h-6zM3062 616h18v3h-18zM3082 616h8v3h-8zM3092 616h12v3h-12zM3106 616h6v3h-6zM3114 616h14v3h-14zM2950 620h28v3h-28zM2980 620h16v3h-16zM2998 620h6v3h-6zM3006 620h4v3h-4zM3012 620h8v3h-8zM3022 620h16v3h-16zM3040 620h10v3h-10zM3052 620h8v3h-8zM3062 620h8v3h-8zM3072 620h2v3h-2zM3076 620h20v3h-20zM3098 620h4v3h-4zM3104 620h2v3h-2zM3108 620h12v3h-12zM3122 620h14v3h-14zM2948 624h6v3h-6zM2948 632h8v3h-8zM2958 632h12v3h-12zM2954 636h18v3h-18zM2974 636h6v3h-6zM2982 636h28v3h-28zM3012 636h22v3h-22zM3036 636h4v3h-4zM3042 636h6v3h-6zM3050 636h8v3h-8zM3060 636h20v3h-20zM3082 636h4v3h-4zM3088 636h2v3h-2zM3092 636h20v3h-20zM3114 636h14v3h-14zM3130 636h20v3h-20zM3152 636h4v3h-4zM2954 640h2v3h-2zM2958 640h12v3h-12zM2972 640h8v3h-8zM2982 640h12v3h-12zM2996 640h6v3h-6zM3004 640h12v3h-12zM3018 640h18v3h-18zM3038 640h4v3h-4zM3044 640h4v3h-4zM3050 640h6v3h-6zM3058 640h8v3h-8zM3068 640h18v3h-18zM3088 640h14v3h-14zM2954 648h10v3h-10zM2966 648h6v3h-6zM2974 648h12v3h-12zM2988 648h12v3h-12zM3002 648h14v3h-14zM3018 648h34v3h-34zM3054 648h4v3h-4zM3060 648h44v3h-44zM3106 648h10v3h-10zM3118 648h10v3h-10zM3130 648h16v3h-16zM3148 648h6v3h-6zM2966 652h8v3h-8zM2976 652h18v3h-18zM2948 660h16v3h-16zM2952 664h46v3h-46zM2952 668h58v3h-58zM2952 672h56v3h-56zM2948 676h18v3h-18zM2948 680h6v3h-6zM2948 688h8v3h-8zM2958 688h14v3h-14zM2974 688h14v3h-14zM2990 688h10v3h-10zM3002 688h8v3h-8zM3012 688h4v3h-4zM3018 688h26v3h-26zM2948 692h16v3h-16zM2952 696h38v3h-38zM2952 700h90v3h-90zM2952 704h42v3h-42zM2996 704h10v3h-10zM3008 704h10v3h-10zM3020 704h4v3h-4zM3026 704h6v3h-6zM3034 704h36v3h-36zM2948 708h18v3h-18zM2948 712h6v3h-6zM2944 724h8v3h-8zM2954 724h14v3h-14zM2950 728h8v3h-8zM2960 728h4v3h-4zM2966 728h2v3h-2zM2970 728h8v3h-8zM2980 728h4v3h-4zM2986 728h14v3h-14zM3002 728h4v3h-4zM3008 728h4v3h-4zM3014 728h8v3h-8zM3024 728h4v3h-4zM3030 728h22v3h-22zM3054 728h18v3h-18zM3074 728h8v3h-8zM3084 728h12v3h-12zM3098 728h26v3h-26zM2950 736h4v3h-4zM2956 736h10v3h-10zM2968 736h8v3h-8zM2978 736h10v3h-10zM2990 736h2v3h-2zM2994 736h6v3h-6zM3002 736h6v3h-6zM3010 736h14v3h-14zM3026 736h2v3h-2zM3030 736h20v3h-20zM3052 736h4v3h-4zM3058 736h6v3h-6zM3066 736h4v3h-4zM3072 736h18v3h-18zM3092 736h14v3h-14zM3108 736h20v3h-20zM2950 740h16v3h-16zM2968 740h8v3h-8zM2978 740h20v3h-20zM3000 740h6v3h-6zM3008 740h8v3h-8zM3018 740h16v3h-16zM3036 740h8v3h-8zM3046 740h10v3h-10zM3058 740h14v3h-14zM3074 740h4v3h-4zM3080 740h12v3h-12zM3094 740h4v3h-4zM3100 740h12v3h-12zM3114 740h8v3h-8zM3124 740h16v3h-16zM2950 744h4v3h-4zM2956 744h4v3h-4zM2962 744h14v3h-14zM2978 744h14v3h-14zM2950 752h8v3h-8zM2960 752h20v3h-20zM2982 752h20v3h-20zM3004 752h8v3h-8zM3014 752h8v3h-8zM3024 752h2v3h-2zM3028 752h12v3h-12zM3042 752h6v3h-6zM3050 752h4v3h-4zM3056 752h4v3h-4zM3062 752h6v3h-6zM3070 752h12v3h-12zM3084 752h2v3h-2zM3088 752h12v3h-12zM3102 752h18v3h-18zM3122 752h6v3h-6zM3130 752h8v3h-8zM2950 756h22v3h-22zM2974 756h4v3h-4zM2980 756h4v3h-4zM2986 756h8v3h-8zM2996 756h4v3h-4zM3002 756h4v3h-4zM3008 756h18v3h-18zM3028 756h16v3h-16zM3046 756h10v3h-10zM3058 756h6v3h-6zM3066 756h12v3h-12zM3080 756h8v3h-8zM3090 756h8v3h-8zM3100 756h4v3h-4zM3106 756h6v3h-6zM3114 756h18v3h-18zM2950 760h12v3h-12zM2964 760h6v3h-6zM2972 760h8v3h-8zM2982 760h22v3h-22zM2948 764h6v3h-6zM2948 772h8v3h-8zM2958 772h12v3h-12zM2954 776h18v3h-18zM2974 776h2v3h-2zM2978 776h20v3h-20zM3000 776h12v3h-12zM3014 776h8v3h-8zM3024 776h4v3h-4zM3030 776h6v3h-6zM3038 776h14v3h-14zM3054 776h4v3h-4zM3060 776h2v3h-2zM3064 776h10v3h-10zM3076 776h22v3h-22zM3100 776h6v3h-6zM3108 776h20v3h-20zM3130 776h8v3h-8zM2954 780h8v3h-8zM2964 780h12v3h-12zM2978 780h12v3h-12zM2992 780h6v3h-6zM3000 780h4v3h-4zM3006 780h4v3h-4zM3012 780h8v3h-8zM3022 780h14v3h-14zM3038 780h6v3h-6zM3046 780h16v3h-16zM3064 780h14v3h-14zM3080 780h4v3h-4zM3086 780h8v3h-8zM3096 780h14v3h-14zM3112 780h6v3h-6zM3120 780h6v3h-6zM3128 780h8v3h-8zM2954 784h6v3h-6zM2962 784h22v3h-22zM2986 784h6v3h-6zM2994 784h12v3h-12zM3008 784h12v3h-12zM3022 784h18v3h-18zM3042 784h6v3h-6zM3050 784h8v3h-8zM3060 784h4v3h-4zM3066 784h12v3h-12zM3080 784h12v3h-12zM3094 784h6v3h-6zM3102 784h6v3h-6zM3110 784h4v3h-4zM3116 784h16v3h-16zM2948 792h16v3h-16zM2952 796h34v3h-34zM2952 800h66v3h-66zM2952 804h22v3h-22zM2976 804h16v3h-16zM2994 804h8v3h-8zM3004 804h6v3h-6zM3012 804h8v3h-8zM3022 804h28v3h-28zM2952 808h90v3h-90zM2948 812h18v3h-18zM2950 816h6v3h-6zM2944 856h8v3h-8zM2954 856h16v3h-16zM2950 860h8v3h-8zM2960 860h4v3h-4zM2966 860h2v3h-2zM2970 860h8v3h-8zM2980 860h4v3h-4zM2986 860h16v3h-16zM3004 860h10v3h-10zM3016 860h6v3h-6zM3024 860h4v3h-4zM3030 860h18v3h-18zM3050 860h4v3h-4zM3056 860h2v3h-2zM3060 860h14v3h-14zM3076 860h4v3h-4zM3082 860h10v3h-10zM3094 860h6v3h-6zM3102 860h10v3h-10zM3114 860h6v3h-6zM3122 860h12v3h-12zM2950 864h6v3h-6zM2958 864h10v3h-10zM2970 864h16v3h-16zM2988 864h16v3h-16zM3006 864h16v3h-16zM3024 864h4v3h-4zM3030 864h6v3h-6zM3038 864h24v3h-24zM3064 864h6v3h-6zM3072 864h16v3h-16zM3090 864h4v3h-4zM3096 864h14v3h-14zM3112 864h10v3h-10zM3124 864h16v3h-16zM2950 868h16v3h-16zM2968 868h10v3h-10zM2980 868h6v3h-6zM2988 868h20v3h-20zM3010 868h18v3h-18zM3030 868h10v3h-10zM3042 868h10v3h-10zM3054 868h6v3h-6zM3062 868h10v3h-10zM3074 868h4v3h-4zM3080 868h8v3h-8zM3090 868h4v3h-4zM3096 868h6v3h-6zM3104 868h10v3h-10zM3116 868h24v3h-24zM2950 876h6v3h-6zM2958 876h16v3h-16zM2976 876h4v3h-4zM2982 876h6v3h-6zM2990 876h8v3h-8zM3000 876h4v3h-4zM3006 876h22v3h-22zM3030 876h14v3h-14zM3046 876h12v3h-12zM3060 876h2v3h-2zM3064 876h8v3h-8zM3074 876h12v3h-12zM3088 876h2v3h-2zM3092 876h8v3h-8zM3102 876h10v3h-10zM3114 876h4v3h-4zM3120 876h8v3h-8zM3130 876h10v3h-10zM2950 880h8v3h-8zM2960 880h12v3h-12zM2974 880h16v3h-16zM2992 880h4v3h-4zM2998 880h20v3h-20zM3020 880h6v3h-6zM3028 880h6v3h-6zM3036 880h14v3h-14zM3052 880h2v3h-2zM3056 880h16v3h-16zM3074 880h8v3h-8zM3084 880h8v3h-8zM3094 880h8v3h-8zM3104 880h6v3h-6zM3112 880h16v3h-16zM3130 880h4v3h-4zM2950 884h24v3h-24zM2976 884h12v3h-12zM2990 884h6v3h-6zM2998 884h10v3h-10zM3010 884h14v3h-14zM3026 884h4v3h-4zM3032 884h18v3h-18zM3052 884h6v3h-6zM3060 884h12v3h-12zM3074 884h14v3h-14zM2950 892h4v3h-4zM2956 892h10v3h-10zM2968 892h12v3h-12zM2982 892h16v3h-16zM3000 892h6v3h-6zM3008 892h4v3h-4zM3014 892h18v3h-18zM3034 892h4v3h-4zM3040 892h2v3h-2zM3044 892h14v3h-14zM3060 892h4v3h-4zM3066 892h10v3h-10zM3078 892h6v3h-6zM3086 892h6v3h-6zM3094 892h2v3h-2zM3098 892h6v3h-6zM3106 892h28v3h-28zM2950 896h14v3h-14zM2966 896h4v3h-4zM2972 896h8v3h-8zM2982 896h16v3h-16zM3000 896h28v3h-28zM3030 896h2v3h-2zM3034 896h8v3h-8zM3044 896h4v3h-4zM3050 896h18v3h-18zM3070 896h12v3h-12zM3084 896h14v3h-14zM3100 896h6v3h-6zM3108 896h22v3h-22zM2950 900h12v3h-12zM2964 900h4v3h-4zM2970 900h6v3h-6zM2978 900h18v3h-18zM2998 900h4v3h-4zM3004 900h2v3h-2zM3008 900h18v3h-18zM3028 900h12v3h-12zM3042 900h16v3h-16zM3060 900h2v3h-2zM3064 900h20v3h-20zM3086 900h10v3h-10zM3098 900h6v3h-6zM3106 900h6v3h-6zM3114 900h18v3h-18zM2950 904h4v3h-4zM2956 904h12v3h-12zM2970 904h14v3h-14zM2986 904h6v3h-6zM2994 904h20v3h-20zM3016 904h16v3h-16zM3034 904h6v3h-6zM3042 904h8v3h-8zM3052 904h4v3h-4zM3058 904h18v3h-18zM3078 904h4v3h-4zM3084 904h6v3h-6zM3092 904h14v3h-14zM3108 904h14v3h-14zM3124 904h10v3h-10zM3136 904h2v3h-2zM2950 908h10v3h-10zM2962 908h4v3h-4zM2968 908h10v3h-10zM2980 908h10v3h-10zM2992 908h16v3h-16zM3010 908h2v3h-2zM3014 908h14v3h-14zM3030 908h8v3h-8zM3040 908h6v3h-6zM3048 908h10v3h-10zM3060 908h4v3h-4zM3066 908h16v3h-16zM3084 908h4v3h-4zM3090 908h2v3h-2zM3094 908h6v3h-6zM3102 908h14v3h-14zM3118 908h4v3h-4zM3124 908h22v3h-22zM2950 912h16v3h-16zM2968 912h6v3h-6zM2976 912h8v3h-8zM2986 912h4v3h-4zM2992 912h12v3h-12zM3006 912h16v3h-16zM3024 912h6v3h-6zM3032 912h4v3h-4zM3038 912h18v3h-18zM3058 912h16v3h-16zM3076 912h8v3h-8zM3086 912h6v3h-6zM3094 912h14v3h-14zM3110 912h10v3h-10zM2950 920h10v3h-10zM2962 920h6v3h-6zM2970 920h16v3h-16zM2988 920h14v3h-14zM3004 920h4v3h-4zM3010 920h6v3h-6zM3018 920h26v3h-26zM3046 920h6v3h-6zM3054 920h6v3h-6zM3062 920h20v3h-20zM3084 920h4v3h-4zM3090 920h20v3h-20zM3112 920h8v3h-8zM3122 920h16v3h-16zM2962 924h26v3h-26zM2990 924h12v3h-12zM3004 924h26v3h-26zM3032 924h6v3h-6zM3040 924h18v3h-18zM3060 924h20v3h-20zM3082 924h4v3h-4zM3088 924h4v3h-4zM3094 924h8v3h-8zM3104 924h4v3h-4zM3110 924h26v3h-26zM2962 928h18v3h-18zM2982 928h6v3h-6zM2990 928h14v3h-14zM3006 928h4v3h-4zM3012 928h6v3h-6zM3020 928h8v3h-8zM2948 936h6v3h-6zM2948 944h8v3h-8zM2958 944h14v3h-14zM2954 948h18v3h-18zM2974 948h2v3h-2zM2978 948h6v3h-6zM2986 948h4v3h-4zM2992 948h26v3h-26zM3020 948h4v3h-4zM3026 948h6v3h-6zM3034 948h10v3h-10zM3046 948h16v3h-16zM3064 948h4v3h-4zM3070 948h4v3h-4zM3076 948h18v3h-18zM3096 948h10v3h-10zM3108 948h6v3h-6zM3116 948h4v3h-4zM3122 948h8v3h-8zM3132 948h4v3h-4zM3138 948h6v3h-6zM2954 952h20v3h-20zM2976 952h18v3h-18zM2996 952h12v3h-12zM3010 952h6v3h-6zM3018 952h22v3h-22zM3042 952h18v3h-18zM3062 952h6v3h-6zM3070 952h4v3h-4zM3076 952h16v3h-16zM3094 952h16v3h-16zM3112 952h6v3h-6zM3120 952h40v3h-40zM2954 956h4v3h-4zM2960 956h6v3h-6zM2968 956h14v3h-14zM2984 956h10v3h-10zM2996 956h16v3h-16zM3014 956h8v3h-8zM3024 956h4v3h-4zM3030 956h8v3h-8zM3040 956h4v3h-4zM3046 956h4v3h-4zM3052 956h8v3h-8zM3062 956h4v3h-4zM3068 956h14v3h-14zM2954 964h4v3h-4zM2960 964h20v3h-20zM2982 964h8v3h-8zM2992 964h16v3h-16zM3010 964h6v3h-6zM3018 964h14v3h-14zM3034 964h28v3h-28zM3064 964h4v3h-4zM3070 964h4v3h-4zM3076 964h6v3h-6zM3084 964h2v3h-2zM3088 964h20v3h-20zM3110 964h12v3h-12zM3124 964h20v3h-20zM2954 968h6v3h-6zM2962 968h18v3h-18zM2982 968h8v3h-8zM2992 968h4v3h-4zM2998 968h20v3h-20zM3020 968h22v3h-22zM3044 968h34v3h-34zM3080 968h30v3h-30zM3112 968h26v3h-26zM3140 968h8v3h-8zM2954 972h8v3h-8zM2964 972h8v3h-8zM2974 972h8v3h-8zM2984 972h4v3h-4zM2990 972h8v3h-8zM3000 972h18v3h-18zM3020 972h4v3h-4zM3026 972h20v3h-20zM3048 972h8v3h-8zM3058 972h6v3h-6zM3066 972h6v3h-6zM3074 972h4v3h-4zM3080 972h20v3h-20zM3102 972h16v3h-16zM3120 972h4v3h-4zM3126 972h20v3h-20zM2954 976h4v3h-4zM2960 976h22v3h-22zM2984 976h24v3h-24zM3010 976h8v3h-8zM3020 976h6v3h-6zM3028 976h8v3h-8zM3038 976h8v3h-8zM3048 976h2v3h-2zM3052 976h8v3h-8zM3062 976h4v3h-4zM3068 976h14v3h-14zM3084 976h8v3h-8zM3094 976h6v3h-6zM3102 976h12v3h-12zM2954 984h8v3h-8zM2964 984h14v3h-14zM2980 984h14v3h-14zM2996 984h8v3h-8zM3006 984h6v3h-6zM3014 984h6v3h-6zM3022 984h14v3h-14zM3038 984h4v3h-4zM3044 984h14v3h-14zM3060 984h22v3h-22zM3084 984h6v3h-6zM3092 984h16v3h-16zM3110 984h2v3h-2zM3114 984h24v3h-24zM3140 984h10v3h-10zM2948 988h18v3h-18zM2952 992h32v3h-32zM2952 1000h24v3h-24zM2956 1004h28v3h-28zM2952 1008h26v3h-26zM2952 1016h28v3h-28zM2956 1020h24v3h-24zM2960 1024h28v3h-28zM2960 1028h32v3h-32zM2994 1028h6v3h-6zM3002 1028h6v3h-6zM3010 1028h6v3h-6zM3018 1028h26v3h-26zM2960 1032h88v3h-88zM2960 1036h48v3h-48zM2960 1040h78v3h-78zM2956 1044h26v3h-26zM2952 1048h30v3h-30zM2948 1052h20v3h-20zM2948 1056h6v3h-6zM2948 1064h8v3h-8zM2954 1068h8v3h-8zM2964 1068h4v3h-4zM2970 1068h14v3h-14zM2986 1068h16v3h-16zM3004 1068h18v3h-18zM3024 1068h4v3h-4zM3030 1068h6v3h-6zM3038 1068h16v3h-16zM3056 1068h24v3h-24zM3082 1068h8v3h-8zM3092 1068h2v3h-2zM3096 1068h10v3h-10zM3108 1068h4v3h-4zM3114 1068h12v3h-12zM3128 1068h10v3h-10zM2954 1072h16v3h-16zM2972 1072h2v3h-2zM2976 1072h16v3h-16zM2994 1072h8v3h-8zM3004 1072h4v3h-4zM3010 1072h6v3h-6zM3018 1072h12v3h-12zM3032 1072h18v3h-18zM3052 1072h4v3h-4zM3058 1072h6v3h-6zM3066 1072h10v3h-10zM3078 1072h8v3h-8zM3088 1072h12v3h-12zM3102 1072h26v3h-26zM3130 1072h10v3h-10zM2954 1076h28v3h-28zM2984 1076h8v3h-8zM2994 1076h10v3h-10zM2954 1084h6v3h-6zM2954 1088h16v3h-16zM2958 1092h74v3h-74zM2958 1096h66v3h-66zM2958 1104h30v3h-30zM2962 1108h92v3h-92zM2958 1112h32v3h-32zM2954 1116h18v3h-18zM2954 1120h6v3h-6zM2954 1128h10v3h-10zM2966 1128h4v3h-4zM2972 1128h6v3h-6zM2980 1128h8v3h-8zM2990 1128h12v3h-12zM3004 1128h4v3h-4zM3010 1128h12v3h-12zM3024 1128h8v3h-8zM3034 1128h26v3h-26zM3062 1128h16v3h-16zM3080 1128h14v3h-14zM3096 1128h6v3h-6zM3104 1128h24v3h-24zM3130 1128h4v3h-4zM2966 1132h18v3h-18zM2986 1132h6v3h-6zM2994 1132h10v3h-10zM3006 1132h8v3h-8zM3016 1132h10v3h-10zM3028 1132h6v3h-6zM3036 1132h6v3h-6zM3044 1132h16v3h-16zM3062 1132h12v3h-12zM3076 1132h6v3h-6zM3084 1132h40v3h-40zM2948 1140h18v3h-18zM2952 1144h32v3h-32zM2952 1152h24v3h-24zM2956 1156h20v3h-20zM2960 1160h46v3h-46zM2960 1164h36v3h-36zM2956 1168h22v3h-22zM2952 1172h26v3h-26zM2952 1180h24v3h-24zM2956 1184h98v3h-98zM2952 1188h26v3h-26zM2948 1192h20v3h-20zM2948 1196h6v3h-6zM2944 1208h8v3h-8zM2954 1208h28v3h-28zM2950 1212h8v3h-8zM2960 1212h4v3h-4zM2966 1212h16v3h-16zM2984 1212h8v3h-8zM2994 1212h6v3h-6zM3002 1212h12v3h-12zM3016 1212h6v3h-6zM3024 1212h6v3h-6zM3032 1212h14v3h-14zM2944 1220h32v3h-32zM2948 1224h100v3h-100zM2948 1228h114v3h-114zM2944 1232h34v3h-34zM2944 1236h6v3h-6z"/>
<path fill="#6a9955" fill-opacity="0.38" d="M2942 272h2v4h-2zM2942 276h2v4h-2zM2942 280h2v4h-2zM2942 284h2v4h-2zM2942 288h2v4h-2zM2942 292h2v4h-2zM2942 296h2v4h-2zM2942 300h2v4h-2zM2942 304h2v4h-2zM2942 308h2v4h-2zM2942 312h2v4h-2zM2942 316h2v4h-2zM2942 320h2v4h-2zM2942 324h2v4h-2zM2942 328h2v4h-2zM2942 332h2v4h-2zM2942 336h2v4h-2zM2942 340h2v4h-2zM2942 344h2v4h-2zM2942 348h2v4h-2zM2942 352h2v4h-2zM2942 356h2v4h-2zM2942 360h2v4h-2zM2946 380h2v4h-2zM2946 384h2v4h-2zM2946 388h2v4h-2zM2946 408h2v4h-2zM2946 412h2v4h-2zM2946 416h2v4h-2zM2946 420h2v4h-2zM2946 424h2v4h-2zM2946 444h2v4h-2zM2946 448h2v4h-2zM2946 452h2v4h-2zM2946 456h2v4h-2zM2946 476h2v4h-2zM2946 480h2v4h-2zM2946 484h2v4h-2zM2946 488h2v4h-2zM2950 500h2v4h-2zM2946 528h2v4h-2zM2946 532h2v4h-2zM2946 536h2v4h-2zM2946 540h2v4h-2zM2950 552h2v4h-2zM2950 556h2v4h-2zM2946 616h2v4h-2zM2946 620h2v4h-2zM2946 624h2v4h-2zM2950 636h2v4h-2zM2950 640h2v4h-2zM2950 644h2v4h-2zM2950 648h2v4h-2zM2950 652h2v4h-2zM2950 656h2v4h-2zM2946 728h2v4h-2zM2946 732h2v4h-2zM2946 736h2v4h-2zM2946 740h2v4h-2zM2946 744h2v4h-2zM2946 748h2v4h-2zM2946 752h2v4h-2zM2946 756h2v4h-2zM2946 760h2v4h-2zM2946 764h2v4h-2zM2950 776h2v4h-2zM2950 780h2v4h-2zM2950 784h2v4h-2zM2950 788h2v4h-2zM2946 860h2v4h-2zM2946 864h2v4h-2zM2946 868h2v4h-2zM2946 872h2v4h-2zM2946 876h2v4h-2zM2946 880h2v4h-2zM2946 884h2v4h-2zM2946 888h2v4h-2zM2946 892h2v4h-2zM2946 896h2v4h-2zM2946 900h2v4h-2zM2946 904h2v4h-2zM2946 908h2v4h-2zM2946 912h2v4h-2zM2946 916h2v4h-2zM2946 920h2v4h-2zM2946 924h2v4h-2zM2946 928h2v4h-2zM2946 932h2v4h-2zM2946 936h2v4h-2zM2950 948h2v4h-2zM2950 952h2v4h-2zM2950 956h2v4h-2zM2950 960h2v4h-2zM2950 964h2v4h-2zM2950 968h2v4h-2zM2950 972h2v4h-2zM2950 976h2v4h-2zM2950 980h2v4h-2zM2950 984h2v4h-2zM2950 1068h2v4h-2zM2950 1072h2v4h-2zM2950 1076h2v4h-2zM2950 1080h2v4h-2zM2950 1084h2v4h-2zM2950 1088h2v4h-2zM2950 1092h2v4h-2zM2950 1096h2v4h-2zM2950 1100h2v4h-2zM2950 1104h2v4h-2zM2950 1108h2v4h-2zM2950 1112h2v4h-2zM2950 1116h2v4h-2zM2950 1120h2v4h-2zM2950 1124h2v4h-2zM2950 1128h2v4h-2zM2950 1132h2v4h-2zM2950 1136h2v4h-2zM2946 1212h2v4h-2zM2946 1216h2v4h-2z"/></svg>
</body></html>
